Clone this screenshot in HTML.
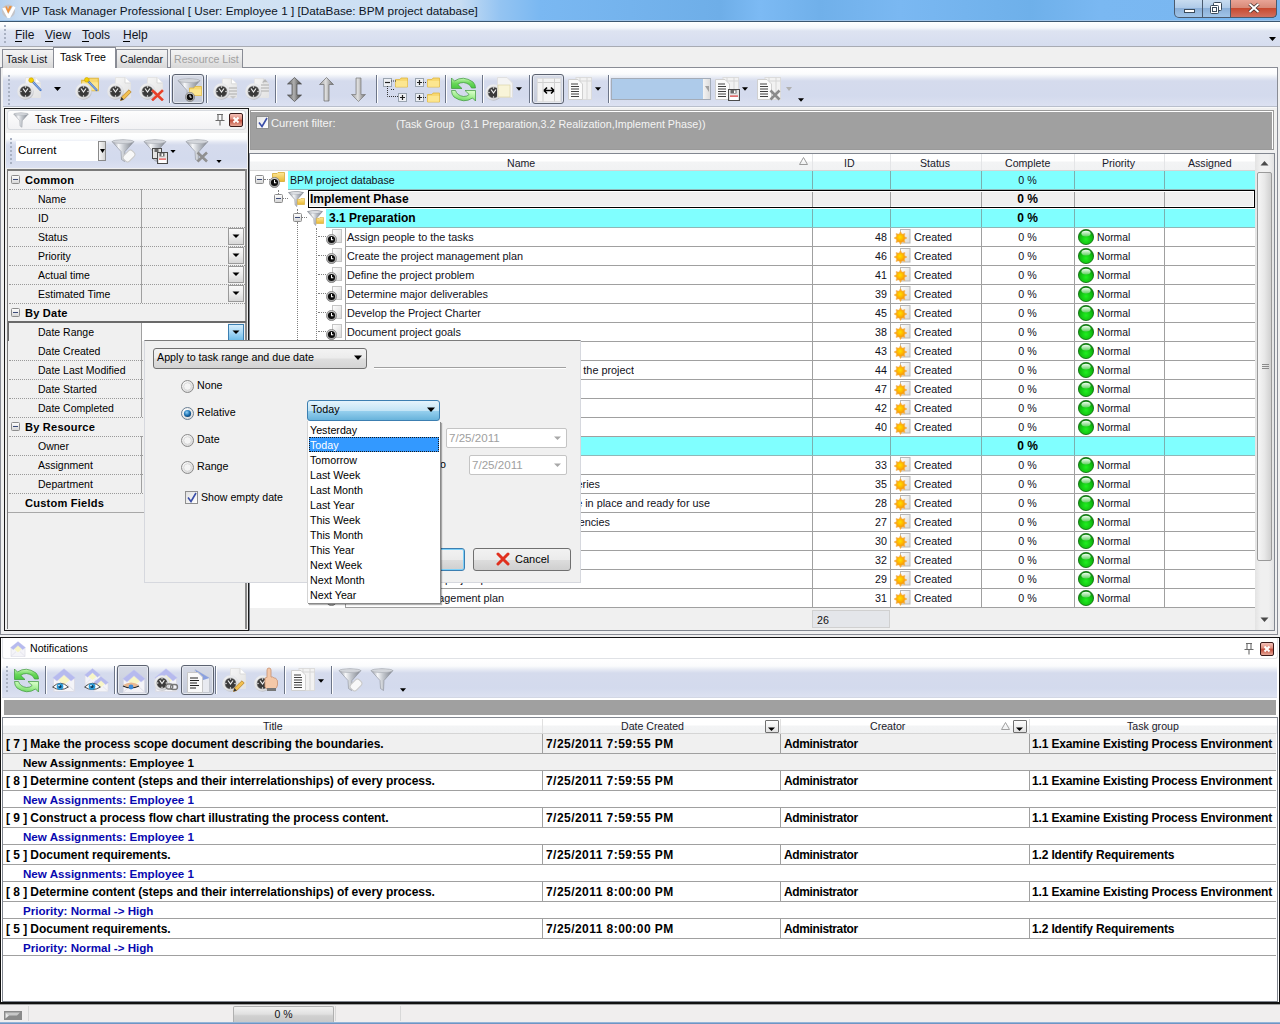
<!DOCTYPE html><html><head><meta charset="utf-8"><style>
html,body{margin:0;padding:0;}
body{width:1280px;height:1024px;overflow:hidden;position:relative;background:#f0f0f0;font-family:"Liberation Sans", sans-serif;color:#000;}
div{box-sizing:border-box;}
</style></head><body>
<svg width="0" height="0" style="position:absolute">
<defs>
<radialGradient id="gball" cx="0.5" cy="0.65" r="0.6"><stop offset="0" stop-color="#20f020"/><stop offset="0.7" stop-color="#10b810"/><stop offset="1" stop-color="#0a800a"/></radialGradient>
<linearGradient id="ghl" x1="0" y1="0" x2="0" y2="1"><stop offset="0" stop-color="#f4fff4"/><stop offset="1" stop-color="#60d060"/></linearGradient>
<radialGradient id="gsun" cx="0.45" cy="0.4" r="0.6"><stop offset="0" stop-color="#ffe000"/><stop offset="0.6" stop-color="#ffb800"/><stop offset="1" stop-color="#f59a10"/></radialGradient>
<linearGradient id="gdoc" x1="0" y1="0" x2="1" y2="1"><stop offset="0" stop-color="#ffffff"/><stop offset="1" stop-color="#d8d8d8"/></linearGradient>
<linearGradient id="gminus" x1="0" y1="0" x2="0" y2="1"><stop offset="0" stop-color="#ffffff"/><stop offset="1" stop-color="#d4d4d4"/></linearGradient>
<linearGradient id="gfun" x1="0" y1="0" x2="1" y2="0"><stop offset="0" stop-color="#8a8f99"/><stop offset="0.35" stop-color="#f4f6f8"/><stop offset="0.6" stop-color="#b8bcc4"/><stop offset="1" stop-color="#7c818a"/></linearGradient>
<linearGradient id="gfold" x1="0" y1="0" x2="0" y2="1"><stop offset="0" stop-color="#ffe89a"/><stop offset="1" stop-color="#e8b830"/></linearGradient>
<radialGradient id="gclkring" cx="0.5" cy="0.4" r="0.6"><stop offset="0" stop-color="#ffffff"/><stop offset="1" stop-color="#9a9a9a"/></radialGradient>
<symbol id="ball" viewBox="0 0 16 16"><circle cx="8" cy="8" r="7.6" fill="url(#gball)" stroke="#0b6a0b" stroke-width="0.8"/><ellipse cx="8" cy="4.6" rx="4.6" ry="2.9" fill="url(#ghl)"/></symbol>
<symbol id="sun" viewBox="0 0 17 17"><rect x="6.5" y="0.5" width="9.5" height="13.5" fill="url(#gdoc)" stroke="#b8b8b8"/><path d="M6.5 2.5 L8.1 5.2 L11 4.5 L10.4 7.5 L13 9 L10.4 10.5 L11 13.5 L8.1 12.8 L6.5 15.5 L4.9 12.8 L2 13.5 L2.6 10.5 L0 9 L2.6 7.5 L2 4.5 L4.9 5.2Z" fill="#f8a828" stroke="#f0b050" stroke-width="0.5"/><circle cx="6.5" cy="9" r="4" fill="url(#gsun)"/></symbol>
<symbol id="clk" viewBox="0 0 12 12"><circle cx="6" cy="6" r="5.6" fill="url(#gclkring)" stroke="#6a6a6a" stroke-width="0.6"/><circle cx="6" cy="6" r="3.9" fill="#0c0c0c"/><path d="M6 3.4 V6.2 H8" stroke="#fff" stroke-width="1.1" fill="none"/></symbol>
<symbol id="tdoc" viewBox="0 0 10 14"><rect x="0.5" y="0.5" width="9" height="13" fill="url(#gdoc)" stroke="#c4c4c4"/></symbol>
<symbol id="minus" viewBox="0 0 9 9"><rect x="0.5" y="0.5" width="8" height="8" rx="1" fill="url(#gminus)" stroke="#8c8c8c"/><rect x="2" y="4" width="5" height="1" fill="#3a4a78"/></symbol>
<symbol id="fun" viewBox="0 0 16 16"><path d="M0.5 1.5 Q8 -0.5 15.5 1.5 L9.2 8.5 L8.8 15.5 L7.2 14 L6.8 8.5Z" fill="url(#gfun)" stroke="#7a7f88" stroke-width="0.6"/><ellipse cx="8" cy="2" rx="6.5" ry="1.2" fill="#e8eaee" stroke="#9da2aa" stroke-width="0.5"/></symbol>
<symbol id="fold" viewBox="0 0 9 8"><path d="M0.5 1.5 H3.5 L4.5 0.5 H8.5 V7.5 H0.5Z" fill="url(#gfold)" stroke="#d0a020" stroke-width="0.6"/></symbol>
<symbol id="fold2" viewBox="0 0 13 10"><path d="M0.5 1.5 H5 L6 0.5 H12.5 V9.5 H0.5Z" fill="url(#gfold)" stroke="#d0a020" stroke-width="0.7"/></symbol>
</defs></svg>
<div style="position:absolute;left:0px;top:0px;width:1280px;height:21px;background:linear-gradient(90deg,#b4d0ee 0px,#c8dcf2 20px,#d2e3f4 240px,#c8ddf3 460px,#94c4f2 500px,#7ab8f2 540px,#6eaee8 720px,#7cbaf4 760px,#70b0ea 820px,#7ab8f2 900px,#6eb0ea 1030px,#7ab8f2 1100px,#78b6f0 1280px)"></div>
<div style="position:absolute;left:0px;top:20px;width:1280px;height:1px;background:#9ec4ea"></div>
<div style="position:absolute;left:0px;top:21px;width:1280px;height:1px;background:#3b5670"></div>
<div style="position:absolute;left:21px;top:3px;white-space:pre;font-size:11.75px;line-height:15px;color:#0c1424">VIP Task Manager Professional [ User: Employee 1 ] [DataBase: BPM project database]</div>
<div style="position:absolute;left:0px;top:22px;width:1280px;height:24px;background:linear-gradient(#ffffff 0px,#f4f6fb 6px,#dde3f1 9px,#d6ddef 24px)"></div>
<div style="position:absolute;left:0px;top:46px;width:1280px;height:1px;background:#a8abb3"></div>
<div style="position:absolute;left:15px;top:28px;white-space:pre;font-size:12px;line-height:15px;color:#10141c">File</div>
<div style="position:absolute;left:15px;top:41px;width:7px;height:1px;background:#000"></div>
<div style="position:absolute;left:45px;top:28px;white-space:pre;font-size:12px;line-height:15px;color:#10141c">View</div>
<div style="position:absolute;left:45px;top:41px;width:8px;height:1px;background:#000"></div>
<div style="position:absolute;left:82px;top:28px;white-space:pre;font-size:12px;line-height:15px;color:#10141c">Tools</div>
<div style="position:absolute;left:82px;top:41px;width:7px;height:1px;background:#000"></div>
<div style="position:absolute;left:123px;top:28px;white-space:pre;font-size:12px;line-height:15px;color:#10141c">Help</div>
<div style="position:absolute;left:123px;top:41px;width:7px;height:1px;background:#000"></div>
<div style="position:absolute;left:0px;top:67px;width:1278px;height:1px;background:#898c95"></div>
<div style="position:absolute;left:2px;top:49px;width:52px;height:19px;background:linear-gradient(#f4f4f4,#e8e8e8 50%,#d8d8d8);border:1px solid #898c95;border-bottom:none"></div>
<div style="position:absolute;left:6px;top:52px;white-space:pre;font-size:10.6px;line-height:14px;color:#10141c">Task List</div>
<div style="position:absolute;left:170px;top:49px;width:73px;height:19px;background:linear-gradient(#f4f4f4,#e8e8e8 50%,#d8d8d8);border:1px solid #898c95;border-bottom:none"></div>
<div style="position:absolute;left:174px;top:52px;white-space:pre;font-size:10.6px;line-height:14px;color:#a0a0a0">Resource List</div>
<div style="position:absolute;left:116px;top:49px;width:52px;height:19px;background:linear-gradient(#f4f4f4,#e8e8e8 50%,#d8d8d8);border:1px solid #898c95;border-bottom:none"></div>
<div style="position:absolute;left:120px;top:52px;white-space:pre;font-size:10.6px;line-height:14px;color:#10141c">Calendar</div>
<div style="position:absolute;left:53px;top:47px;width:63px;height:21px;background:#fff;border:1px solid #898c95;border-bottom:none"></div>
<div style="position:absolute;left:60px;top:50px;white-space:pre;font-size:10.6px;line-height:14px;">Task Tree</div>
<div style="position:absolute;left:0px;top:68px;width:1278px;height:567px;background:#f0f0f0;border:1px solid #898c95;border-top:none"></div>
<div style="position:absolute;left:3px;top:68px;width:1274px;height:39px;background:linear-gradient(#ffffff 0px,#fbfcfd 6px,#e4e8f3 10px,#d5dbed 13px,#d3daed 28px,#dce1f1 38px)"></div>
<div style="position:absolute;left:3px;top:106px;width:1274px;height:1px;background:#b9bfcc"></div>
<div style="position:absolute;left:3px;top:107px;width:1274px;height:1px;background:#f8f8f8"></div>
<div style="position:absolute;left:4px;top:108px;width:245px;height:523px;background:#f0f0f0;border:2px solid #1a1a1a;border-width:1px 1px 1px 1px"></div>
<div style="position:absolute;left:7px;top:110px;width:239px;height:20px;background:linear-gradient(#fdfdfd,#f2f2f4);border:1px solid #d8dbe0;border-radius:3px"></div>
<div style="position:absolute;left:35px;top:112px;white-space:pre;font-size:10.6px;line-height:15px;">Task Tree - Filters</div>
<div style="position:absolute;left:6px;top:133px;width:241px;height:35px;background:linear-gradient(#ffffff 0px,#fbfcfd 6px,#e4e8f3 9px,#d5dbed 12px,#d3daed 26px,#dce1f1 35px)"></div>
<div style="position:absolute;left:16px;top:141px;width:90px;height:20px;background:#fff"></div>
<div style="position:absolute;left:7px;top:169px;width:240px;height:460px;background:#f0f0f0;border:2px solid #7a7a7a;border-width:2px 0 0 1px"></div>
<svg width="0" height="0" style="position:absolute"><defs>
<linearGradient id="gbtn" x1="0" y1="0" x2="0" y2="1"><stop offset="0" stop-color="#fbfbfb"/><stop offset="0.5" stop-color="#ececec"/><stop offset="1" stop-color="#d6d6d6"/></linearGradient>
<linearGradient id="gbtnb" x1="0" y1="0" x2="0" y2="1"><stop offset="0" stop-color="#d9effc"/><stop offset="0.5" stop-color="#a6d8f6"/><stop offset="1" stop-color="#6cbbe8"/></linearGradient>
<symbol id="ddbtn" viewBox="0 0 16 17"><rect x="0.5" y="0.5" width="15" height="16" fill="url(#gbtn)" stroke="#9a9a9a"/><path d="M4.5 6.5 H11.5 L8 10Z" fill="#000"/></symbol>
<symbol id="ddbtnb" viewBox="0 0 16 17"><rect x="0.5" y="0.5" width="15" height="16" fill="url(#gbtnb)" stroke="#3c7fb1"/><path d="M4.5 6.5 H11.5 L8 10Z" fill="#000"/></symbol>
</defs></svg>
<svg style="position:absolute;left:11px;top:175px" width="9" height="9"><use href="#minus" width="9" height="9"/></svg>
<div style="position:absolute;left:25px;top:173px;white-space:pre;font-size:11.1px;line-height:15px;font-weight:bold;letter-spacing:0.2px">Common</div>
<div style="position:absolute;left:9px;top:189px;width:236px;border-top:1px dotted #9a9a9a"></div>
<div style="position:absolute;left:38px;top:192px;white-space:pre;font-size:10.5px;line-height:15px;color:#000">Name</div>
<div style="position:absolute;left:141px;top:189px;width:1px;height:19px;background:#a0a0a0"></div>
<div style="position:absolute;left:9px;top:208px;width:236px;border-top:1px dotted #9a9a9a"></div>
<div style="position:absolute;left:38px;top:211px;white-space:pre;font-size:10.5px;line-height:15px;color:#000">ID</div>
<div style="position:absolute;left:141px;top:208px;width:1px;height:19px;background:#a0a0a0"></div>
<div style="position:absolute;left:9px;top:227px;width:236px;border-top:1px dotted #9a9a9a"></div>
<div style="position:absolute;left:38px;top:230px;white-space:pre;font-size:10.5px;line-height:15px;color:#000">Status</div>
<div style="position:absolute;left:141px;top:227px;width:1px;height:19px;background:#a0a0a0"></div>
<svg style="position:absolute;left:228px;top:228px" width="16" height="17"><use href="#ddbtn" width="16" height="17"/></svg>
<div style="position:absolute;left:9px;top:246px;width:236px;border-top:1px dotted #9a9a9a"></div>
<div style="position:absolute;left:38px;top:249px;white-space:pre;font-size:10.5px;line-height:15px;color:#000">Priority</div>
<div style="position:absolute;left:141px;top:246px;width:1px;height:19px;background:#a0a0a0"></div>
<svg style="position:absolute;left:228px;top:247px" width="16" height="17"><use href="#ddbtn" width="16" height="17"/></svg>
<div style="position:absolute;left:9px;top:265px;width:236px;border-top:1px dotted #9a9a9a"></div>
<div style="position:absolute;left:38px;top:268px;white-space:pre;font-size:10.5px;line-height:15px;color:#000">Actual time</div>
<div style="position:absolute;left:141px;top:265px;width:1px;height:19px;background:#a0a0a0"></div>
<svg style="position:absolute;left:228px;top:266px" width="16" height="17"><use href="#ddbtn" width="16" height="17"/></svg>
<div style="position:absolute;left:9px;top:284px;width:236px;border-top:1px dotted #9a9a9a"></div>
<div style="position:absolute;left:38px;top:287px;white-space:pre;font-size:10.5px;line-height:15px;color:#000">Estimated Time</div>
<div style="position:absolute;left:141px;top:284px;width:1px;height:19px;background:#a0a0a0"></div>
<svg style="position:absolute;left:228px;top:285px" width="16" height="17"><use href="#ddbtn" width="16" height="17"/></svg>
<div style="position:absolute;left:9px;top:303px;width:236px;border-top:1px dotted #9a9a9a"></div>
<svg style="position:absolute;left:11px;top:308px" width="9" height="9"><use href="#minus" width="9" height="9"/></svg>
<div style="position:absolute;left:25px;top:306px;white-space:pre;font-size:11.1px;line-height:15px;font-weight:bold;letter-spacing:0.2px">By Date</div>
<div style="position:absolute;left:38px;top:325px;white-space:pre;font-size:10.5px;line-height:15px;color:#000">Date Range</div>
<div style="position:absolute;left:141px;top:322px;width:1px;height:19px;background:#a0a0a0"></div>
<div style="position:absolute;left:142px;top:323px;width:86px;height:18px;background:#fff"></div>
<svg style="position:absolute;left:228px;top:324px" width="16" height="17"><use href="#ddbtnb" width="16" height="17"/></svg>
<div style="position:absolute;left:38px;top:344px;white-space:pre;font-size:10.5px;line-height:15px;color:#000">Date Created</div>
<div style="position:absolute;left:141px;top:341px;width:1px;height:19px;background:#a0a0a0"></div>
<div style="position:absolute;left:9px;top:360px;width:236px;border-top:1px dotted #9a9a9a"></div>
<div style="position:absolute;left:38px;top:363px;white-space:pre;font-size:10.5px;line-height:15px;color:#000">Date Last Modified</div>
<div style="position:absolute;left:141px;top:360px;width:1px;height:19px;background:#a0a0a0"></div>
<div style="position:absolute;left:9px;top:379px;width:236px;border-top:1px dotted #9a9a9a"></div>
<div style="position:absolute;left:38px;top:382px;white-space:pre;font-size:10.5px;line-height:15px;color:#000">Date Started</div>
<div style="position:absolute;left:141px;top:379px;width:1px;height:19px;background:#a0a0a0"></div>
<div style="position:absolute;left:9px;top:398px;width:236px;border-top:1px dotted #9a9a9a"></div>
<div style="position:absolute;left:38px;top:401px;white-space:pre;font-size:10.5px;line-height:15px;color:#000">Date Completed</div>
<div style="position:absolute;left:141px;top:398px;width:1px;height:19px;background:#a0a0a0"></div>
<div style="position:absolute;left:9px;top:417px;width:236px;border-top:1px dotted #9a9a9a"></div>
<svg style="position:absolute;left:11px;top:422px" width="9" height="9"><use href="#minus" width="9" height="9"/></svg>
<div style="position:absolute;left:25px;top:420px;white-space:pre;font-size:11.1px;line-height:15px;font-weight:bold;letter-spacing:0.2px">By Resource</div>
<div style="position:absolute;left:9px;top:436px;width:236px;border-top:1px dotted #9a9a9a"></div>
<div style="position:absolute;left:38px;top:439px;white-space:pre;font-size:10.5px;line-height:15px;color:#000">Owner</div>
<div style="position:absolute;left:141px;top:436px;width:1px;height:19px;background:#a0a0a0"></div>
<div style="position:absolute;left:9px;top:455px;width:236px;border-top:1px dotted #9a9a9a"></div>
<div style="position:absolute;left:38px;top:458px;white-space:pre;font-size:10.5px;line-height:15px;color:#000">Assignment</div>
<div style="position:absolute;left:141px;top:455px;width:1px;height:19px;background:#a0a0a0"></div>
<div style="position:absolute;left:9px;top:474px;width:236px;border-top:1px dotted #9a9a9a"></div>
<div style="position:absolute;left:38px;top:477px;white-space:pre;font-size:10.5px;line-height:15px;color:#000">Department</div>
<div style="position:absolute;left:141px;top:474px;width:1px;height:19px;background:#a0a0a0"></div>
<div style="position:absolute;left:9px;top:493px;width:236px;border-top:1px dotted #9a9a9a"></div>
<div style="position:absolute;left:25px;top:496px;white-space:pre;font-size:11.1px;line-height:15px;font-weight:bold;letter-spacing:0.2px">Custom Fields</div>
<div style="position:absolute;left:8px;top:512px;width:237px;height:1px;background:#a8a8a8"></div>
<div style="position:absolute;left:245px;top:169px;width:2px;height:460px;background:#8a8a8a"></div>
<div style="position:absolute;left:8px;top:321px;width:238px;height:2px;background:#6a6a6a"></div>
<div style="position:absolute;left:8px;top:321px;width:1px;height:20px;background:#6a6a6a"></div>
<svg width="0" height="0" style="position:absolute"><defs>
<radialGradient id="gring" cx="0.45" cy="0.4" r="0.65"><stop offset="0" stop-color="#ffffff"/><stop offset="0.75" stop-color="#e2e3e6"/><stop offset="1" stop-color="#a8aab0"/></radialGradient>
<linearGradient id="gpage" x1="0" y1="0" x2="1" y2="1"><stop offset="0" stop-color="#f6f6f6"/><stop offset="1" stop-color="#e2e2e2"/></linearGradient>
<linearGradient id="gfunb" x1="0" y1="0" x2="1" y2="0"><stop offset="0" stop-color="#8d929b"/><stop offset="0.3" stop-color="#f6f7f9"/><stop offset="0.55" stop-color="#c4c8ce"/><stop offset="1" stop-color="#7d828b"/></linearGradient>
<linearGradient id="garr" x1="0" y1="0" x2="1" y2="0"><stop offset="0" stop-color="#9a9a9a"/><stop offset="0.45" stop-color="#e0e0e0"/><stop offset="1" stop-color="#6a6a6a"/></linearGradient>
<linearGradient id="garrd" x1="0" y1="0" x2="1" y2="0"><stop offset="0" stop-color="#5a5a5a"/><stop offset="0.45" stop-color="#b0b0b0"/><stop offset="1" stop-color="#3a3a3a"/></linearGradient>
<linearGradient id="ggreen" x1="0" y1="0" x2="0" y2="1"><stop offset="0" stop-color="#c8f8b8"/><stop offset="0.5" stop-color="#6ad85a"/><stop offset="1" stop-color="#48c840"/></linearGradient><linearGradient id="ggreen2" x1="0" y1="1" x2="0.3" y2="0"><stop offset="0" stop-color="#5cd050"/><stop offset="0.6" stop-color="#a8f098"/><stop offset="1" stop-color="#d0fcc0"/></linearGradient>
<linearGradient id="genv" x1="0" y1="0" x2="0" y2="1"><stop offset="0" stop-color="#8aa0e0"/><stop offset="1" stop-color="#b4c4ee"/></linearGradient>
<symbol id="bclk" viewBox="0 0 17 17"><circle cx="8.5" cy="8.5" r="8.3" fill="url(#gring)"/><circle cx="8.5" cy="8.5" r="5.6" fill="#3a3a3a" stroke="#9a9a9a" stroke-width="0.5"/><path d="M6 5.5 L8.5 9 L11 5.5" stroke="#f0f0f0" stroke-width="1.2" fill="none"/><circle cx="8.5" cy="4" r="0.7" fill="#fff"/><circle cx="8.5" cy="13" r="0.7" fill="#fff"/><circle cx="4" cy="8.5" r="0.7" fill="#fff"/><circle cx="13" cy="8.5" r="0.7" fill="#fff"/></symbol>
<symbol id="pg" viewBox="0 0 16 21"><path d="M0.5 0.5 H10 L15.5 6 V20.5 H0.5Z" fill="url(#gpage)" stroke="#e4e4e4"/><path d="M10 0.5 V6 H15.5" fill="#fff" stroke="#d8d8d8"/></symbol>
<symbol id="funb" viewBox="0 0 24 23"><path d="M1 2.5 Q12 -0.5 23 2.5 L14 12.5 L13.5 22.5 L10.5 20.5 L10 12.5Z" fill="url(#gfunb)" stroke="#8a8f98" stroke-width="0.6"/><ellipse cx="12" cy="2.6" rx="10.6" ry="1.9" fill="#d4d7dc" stroke="#a9adb4" stroke-width="0.6"/></symbol>
<symbol id="tbarrow" viewBox="0 0 7 4"><path d="M0 0 H7 L3.5 4Z" fill="#000"/></symbol>
<symbol id="colpg" viewBox="0 0 24 23"><rect x="8" y="0.5" width="15.5" height="22" fill="#f2f2f2" stroke="#dcdcdc"/><path d="M12 0.5 V22.5 M19 0.5 V22.5 M8 4 H23.5" stroke="#d6d6d6"/><path d="M0.5 2.5 H10 L14.5 7 V22.5 H0.5Z" fill="#fbfbfb" stroke="#d0d0d0"/><path d="M3 7 H10 M3 9.5 H11 M3 12 H11 M3 14.5 H11 M3 17 H11 M3 19.5 H11" stroke="#404040" stroke-width="1"/></symbol>
<symbol id="tplus" viewBox="0 0 9 9"><rect x="0.5" y="0.5" width="8" height="8" fill="#eef0f4" stroke="#9aa4b0"/><path d="M2 4.5 H7 M4.5 2 V7" stroke="#222" stroke-width="1.2"/></symbol>
<symbol id="tminus" viewBox="0 0 9 9"><rect x="0.5" y="0.5" width="8" height="8" fill="#eef0f4" stroke="#9aa4b0"/><path d="M2 4.5 H7" stroke="#222" stroke-width="1.2"/></symbol>
<symbol id="fold3" viewBox="0 0 13 10"><path d="M0.5 2 H5 L6 0.5 H12.5 V9.5 H0.5Z" fill="#f8d870" stroke="#e0b840" stroke-width="0.8"/><rect x="0.8" y="3.4" width="11.4" height="5.8" fill="#fce690"/></symbol>
<symbol id="refresh" viewBox="0 0 25 25"><path d="M0.5 1 L3.5 4 Q12 -2 22 5 Q24.5 7.5 24.5 11 L20.5 11 Q19 6.5 12.5 5.5 Q8.5 5.5 6.8 7.5 L11 11.5 L0.5 11.5 Z" fill="url(#ggreen)" stroke="#3c963a" stroke-width="0.7"/><path d="M24.5 24 L21.5 21 Q13 27 3 20 Q0.5 17.5 0.5 13.5 L4.5 13.5 Q6 18.5 12.5 19.5 Q16.5 19.5 18.2 17.5 L14 13.5 L24.5 13.5 Z" fill="url(#ggreen2)" stroke="#3c963a" stroke-width="0.7"/></symbol>
<symbol id="env" viewBox="0 0 24 24"><path d="M1.5 10 V23.5 H22.5 V10Z" fill="#f4f4f8" stroke="#dcdce6"/><path d="M5.5 11.5 L12 5.5 L18.5 11.5 L12 17Z" fill="#f8f6c6"/><path d="M1.5 23 L9 16 M22.5 23 L15 16" stroke="#dedee8"/><path d="M0.8 9.8 L12 0.8 L23.2 9.8 L19 13 L12 6.8 L5 13Z" fill="#b6baee" stroke="#c8cbf2" stroke-width="0.5"/></symbol>
<symbol id="eye" viewBox="0 0 17 9"><path d="M0.6 5 Q8.5 -2.5 16.4 5 Q8.5 10 0.6 5Z" fill="#ffffff" stroke="#3a3a3a" stroke-width="0.9"/><circle cx="8" cy="4.6" r="3.3" fill="#2a9ad8"/><circle cx="8" cy="4.6" r="1.5" fill="#0a3a5a"/><circle cx="7" cy="3.6" r="0.8" fill="#e8f8ff"/></symbol>
</defs></svg>
<div style="position:absolute;left:8px;top:75px;width:2px;height:2px;background:#a9b1c2"></div>
<div style="position:absolute;left:8px;top:79px;width:2px;height:2px;background:#a9b1c2"></div>
<div style="position:absolute;left:8px;top:83px;width:2px;height:2px;background:#a9b1c2"></div>
<div style="position:absolute;left:8px;top:87px;width:2px;height:2px;background:#a9b1c2"></div>
<div style="position:absolute;left:8px;top:91px;width:2px;height:2px;background:#a9b1c2"></div>
<div style="position:absolute;left:8px;top:95px;width:2px;height:2px;background:#a9b1c2"></div>
<div style="position:absolute;left:8px;top:99px;width:2px;height:2px;background:#a9b1c2"></div>
<div style="position:absolute;left:8px;top:103px;width:2px;height:2px;background:#a9b1c2"></div>
<div style="position:absolute;left:4px;top:25px;width:2px;height:2px;background:#a9b1c2"></div>
<div style="position:absolute;left:4px;top:29px;width:2px;height:2px;background:#a9b1c2"></div>
<div style="position:absolute;left:4px;top:33px;width:2px;height:2px;background:#a9b1c2"></div>
<div style="position:absolute;left:4px;top:37px;width:2px;height:2px;background:#a9b1c2"></div>
<div style="position:absolute;left:4px;top:41px;width:2px;height:2px;background:#a9b1c2"></div>
<svg style="position:absolute;left:25px;top:77px" width="16" height="21"><use href="#pg" width="16" height="21"/></svg>
<svg style="position:absolute;left:17px;top:83px" width="17" height="17"><use href="#bclk" width="17" height="17"/></svg>
<svg style="position:absolute;left:28px;top:77px" width="14" height="15" viewBox="0 0 14 15"><path d="M4 4 L12.5 13" stroke="#4a78c8" stroke-width="2.2" stroke-linecap="round"/><path d="M4 4 L12.5 13" stroke="#a8c8f0" stroke-width="0.8"/><circle cx="3.2" cy="3.2" r="2.4" fill="#f4d000" stroke="#c8a000" stroke-width="0.6"/></svg>
<svg style="position:absolute;left:54px;top:87px" width="7" height="4"><use href="#tbarrow" width="7" height="4"/></svg>
<svg style="position:absolute;left:81px;top:77px" width="18" height="15"><use href="#fold3" width="18" height="15"/></svg>
<svg style="position:absolute;left:75px;top:83px" width="17" height="17"><use href="#bclk" width="17" height="17"/></svg>
<svg style="position:absolute;left:84px;top:77px" width="14" height="15" viewBox="0 0 14 15"><path d="M3 3 L12.5 13" stroke="#4a78c8" stroke-width="2.2" stroke-linecap="round"/><path d="M3 3 L12.5 13" stroke="#a8c8f0" stroke-width="0.8"/><circle cx="2.8" cy="2.8" r="2.3" fill="#f4d000" stroke="#c8a000" stroke-width="0.6"/></svg>
<svg style="position:absolute;left:115px;top:77px" width="16" height="21"><use href="#pg" width="16" height="21"/></svg>
<svg style="position:absolute;left:107px;top:83px" width="17" height="17"><use href="#bclk" width="17" height="17"/></svg>
<svg style="position:absolute;left:119px;top:89px" width="13" height="13" viewBox="0 0 13 13"><path d="M1.5 11.5 L2.5 8 L10 0.8 L12.2 3 L4.8 10.5Z" fill="#f2c050" stroke="#b07820" stroke-width="0.7"/><path d="M1.5 11.5 L2.5 8 L4.8 10.5Z" fill="#333"/></svg>
<svg style="position:absolute;left:147px;top:77px" width="16" height="21"><use href="#pg" width="16" height="21"/></svg>
<svg style="position:absolute;left:139px;top:83px" width="17" height="17"><use href="#bclk" width="17" height="17"/></svg>
<svg style="position:absolute;left:151px;top:89px" width="13" height="12" viewBox="0 0 13 12"><path d="M2 2 L11 10.5 M11 2 L2 10.5" stroke="#e8402a" stroke-width="2.6" stroke-linecap="square"/></svg>
<div style="position:absolute;left:169px;top:75px;width:1px;height:28px;background:#6c7588"></div>
<div style="position:absolute;left:170px;top:75px;width:1px;height:28px;background:#ffffff"></div>
<div style="position:absolute;left:172px;top:74px;width:32px;height:30px;background:linear-gradient(#d6dae6,#c4cad9);border:1px solid #5c6270;border-radius:3px;box-shadow:inset 0 0 0 1px #e6e9f0"></div>
<svg style="position:absolute;left:177px;top:78px" width="24" height="23"><use href="#funb" width="24" height="23"/></svg>
<svg style="position:absolute;left:189px;top:86px" width="13" height="10"><use href="#fold3" width="13" height="10"/></svg>
<svg style="position:absolute;left:185px;top:92px" width="10" height="10"><use href="#clk" width="10" height="10"/></svg>
<div style="position:absolute;left:206px;top:75px;width:1px;height:28px;background:#6c7588"></div>
<div style="position:absolute;left:207px;top:75px;width:1px;height:28px;background:#ffffff"></div>
<svg style="position:absolute;left:222px;top:78px" width="15" height="20"><use href="#pg" width="15" height="20"/></svg>
<svg style="position:absolute;left:213px;top:83px" width="17" height="17"><use href="#bclk" width="17" height="17"/></svg>
<svg style="position:absolute;left:229px;top:87px" width="9" height="12" viewBox="0 0 9 12"><path d="M0 1 H8 M0 4 H8 M0 7 H8" stroke="#c0c0c0" stroke-width="1.6"/><path d="M1 9 H7 L4 12Z" fill="#c8c8c8"/></svg>
<svg style="position:absolute;left:254px;top:78px" width="15" height="20"><use href="#pg" width="15" height="20"/></svg>
<svg style="position:absolute;left:245px;top:83px" width="17" height="17"><use href="#bclk" width="17" height="17"/></svg>
<svg style="position:absolute;left:261px;top:79px" width="9" height="14" viewBox="0 0 9 14"><path d="M1 3.5 H7 L4 0Z" fill="#b8b8b8"/><path d="M0 6 H8 M0 9 H8 M0 12 H8" stroke="#c0c0c0" stroke-width="1.6"/></svg>
<div style="position:absolute;left:275px;top:75px;width:1px;height:28px;background:#6c7588"></div>
<div style="position:absolute;left:276px;top:75px;width:1px;height:28px;background:#ffffff"></div>
<svg style="position:absolute;left:287px;top:77px" width="15" height="25" viewBox="0 0 15 25"><path d="M7.5 0.5 L14.5 7 H10 V18 H14.5 L7.5 24.5 L0.5 18 H5 V7 H0.5Z" fill="url(#garrd)" stroke="#4a4a4a" stroke-width="0.7"/></svg>
<svg style="position:absolute;left:319px;top:77px" width="15" height="25" viewBox="0 0 15 25"><path d="M7.5 0.5 L14.5 7.5 H10 V24 H5 V7.5 H0.5Z" fill="url(#garr)" stroke="#6a6a6a" stroke-width="0.7"/></svg>
<svg style="position:absolute;left:351px;top:77px" width="15" height="25" viewBox="0 0 15 25"><path d="M7.5 24.5 L14.5 17.5 H10 V1 H5 V17.5 H0.5Z" fill="url(#garr)" stroke="#7a7a7a" stroke-width="0.7"/></svg>
<div style="position:absolute;left:376px;top:75px;width:1px;height:28px;background:#6c7588"></div>
<div style="position:absolute;left:377px;top:75px;width:1px;height:28px;background:#ffffff"></div>
<svg style="position:absolute;left:383px;top:78px" width="9" height="9"><use href="#tminus" width="9" height="9"/></svg>
<svg style="position:absolute;left:395px;top:77px" width="13" height="11"><use href="#fold3" width="13" height="11"/></svg>
<svg style="position:absolute;left:386px;top:86px" width="13" height="12" viewBox="0 0 13 12"><path d="M1.5 0 V10.5 H12" stroke="#333" stroke-dasharray="1 1" fill="none"/><path d="M5 3.5 H9" stroke="#333" stroke-dasharray="1 1"/></svg>
<svg style="position:absolute;left:391px;top:80px" width="5" height="2" viewBox="0 0 5 2"><path d="M0 1 H5" stroke="#333" stroke-dasharray="1 1"/></svg>
<svg style="position:absolute;left:398px;top:93px" width="9" height="9"><use href="#tplus" width="9" height="9"/></svg>
<svg style="position:absolute;left:415px;top:78px" width="9" height="9"><use href="#tplus" width="9" height="9"/></svg>
<svg style="position:absolute;left:427px;top:77px" width="13" height="11"><use href="#fold3" width="13" height="11"/></svg>
<svg style="position:absolute;left:415px;top:93px" width="9" height="9"><use href="#tplus" width="9" height="9"/></svg>
<svg style="position:absolute;left:427px;top:92px" width="13" height="11"><use href="#fold3" width="13" height="11"/></svg>
<svg style="position:absolute;left:423px;top:81px" width="5" height="18" viewBox="0 0 5 18"><path d="M0 1.5 H4 M0 16.5 H4 M-4 6 V12" stroke="#333" stroke-dasharray="1 1" fill="none"/></svg>
<div style="position:absolute;left:445px;top:75px;width:1px;height:28px;background:#6c7588"></div>
<div style="position:absolute;left:446px;top:75px;width:1px;height:28px;background:#ffffff"></div>
<svg style="position:absolute;left:451px;top:77px" width="25" height="25"><use href="#refresh" width="25" height="25"/></svg>
<div style="position:absolute;left:482px;top:75px;width:1px;height:28px;background:#6c7588"></div>
<div style="position:absolute;left:483px;top:75px;width:1px;height:28px;background:#ffffff"></div>
<svg style="position:absolute;left:485px;top:84px" width="17" height="17"><use href="#bclk" width="17" height="17"/></svg>
<svg style="position:absolute;left:497px;top:77px" width="16" height="22" viewBox="0 0 16 22"><path d="M0.5 0.5 H10 L15.5 6 V20.5 H0.5Z" fill="#f4f4f4" stroke="#e0e0e0"/><rect x="1" y="8" width="12" height="12" fill="#f8f4d8" stroke="#d8d0a0" stroke-width="0.6"/></svg>
<svg style="position:absolute;left:516px;top:87px" width="6" height="4"><use href="#tbarrow" width="6" height="4"/></svg>
<div style="position:absolute;left:529px;top:75px;width:1px;height:28px;background:#6c7588"></div>
<div style="position:absolute;left:530px;top:75px;width:1px;height:28px;background:#ffffff"></div>
<div style="position:absolute;left:532px;top:74px;width:32px;height:30px;background:linear-gradient(#d6dae6,#c4cad9);border:1px solid #5c6270;border-radius:3px;box-shadow:inset 0 0 0 1px #e6e9f0"></div>
<svg style="position:absolute;left:537px;top:78px" width="24" height="24" viewBox="0 0 24 24"><rect x="0.5" y="0.5" width="23" height="23" fill="#f4f4f4" stroke="#e0e0e0"/><path d="M6 0.5 V23.5 M17.5 0.5 V23.5 M0.5 4.5 H23.5" stroke="#cfcfcf"/><path d="M7 12.5 H17 M7 12.5 L10 9.5 M7 12.5 L10 15.5 M17 12.5 L14 9.5 M17 12.5 L14 15.5" stroke="#000" stroke-width="1.6"/></svg>
<svg style="position:absolute;left:568px;top:77px" width="24" height="23"><use href="#colpg" width="24" height="23"/></svg>
<svg style="position:absolute;left:595px;top:87px" width="6" height="4"><use href="#tbarrow" width="6" height="4"/></svg>
<div style="position:absolute;left:608px;top:75px;width:1px;height:28px;background:#6c7588"></div>
<div style="position:absolute;left:609px;top:75px;width:1px;height:28px;background:#ffffff"></div>
<div style="position:absolute;left:611px;top:78px;width:100px;height:22px;background:#aecbea;border:1px solid #a4acb8"></div>
<div style="position:absolute;left:703px;top:79px;width:7px;height:20px;background:linear-gradient(90deg,#f4f4f4,#dcdcdc)"></div>
<svg style="position:absolute;left:705px;top:86px" width="4" height="6" viewBox="0 0 4 6"><path d="M0 0 H4 V6Z" fill="#a0a0a0"/></svg>
<svg style="position:absolute;left:715px;top:77px" width="24" height="23"><use href="#colpg" width="24" height="23"/></svg>
<svg style="position:absolute;left:728px;top:89px" width="12" height="12" viewBox="0 0 12 12"><rect x="0.5" y="0.5" width="11" height="11" fill="#e4e4e4" stroke="#4a4a4a"/><rect x="2.5" y="1" width="6" height="3.5" fill="#6a6a6a"/><rect x="6" y="1.5" width="1.5" height="2.5" fill="#fff"/><rect x="2" y="6.5" width="8" height="4.5" fill="#fff"/><rect x="2" y="6.5" width="8" height="1.2" fill="#d03030"/></svg>
<svg style="position:absolute;left:742px;top:87px" width="6" height="4"><use href="#tbarrow" width="6" height="4"/></svg>
<svg style="position:absolute;left:757px;top:77px" width="24" height="23"><use href="#colpg" width="24" height="23"/></svg>
<svg style="position:absolute;left:769px;top:89px" width="12" height="12" viewBox="0 0 12 12"><path d="M1.5 1.5 L10.5 10.5 M10.5 1.5 L1.5 10.5" stroke="#8a8a8a" stroke-width="2.6"/></svg>
<svg style="position:absolute;left:786px;top:87px" width="6" height="4" viewBox="0 0 6 4"><path d="M0 0 H6 L3 4Z" fill="#b0b0b0"/></svg>
<svg style="position:absolute;left:798px;top:98px" width="6" height="4"><use href="#tbarrow" width="6" height="4"/></svg>
<svg style="position:absolute;left:1269px;top:37px" width="7" height="4" viewBox="0 0 7 4"><path d="M0 0 H7 L3.5 4Z" fill="#000"/></svg>
<svg style="position:absolute;left:13px;top:112px" width="16" height="16"><use href="#funb" width="16" height="16"/></svg>
<svg style="position:absolute;left:214px;top:113px" width="12" height="13" viewBox="0 0 12 13"><path d="M3 1.5 H9 M4 1.5 V7 M8 1.5 V7 M1.5 7.5 H10.5 M6 7.5 V12.5" stroke="#6a6a6a" stroke-width="1.1" fill="none"/></svg>
<div style="position:absolute;left:229px;top:113px;width:14px;height:14px;background:linear-gradient(#f4c0b8 0%,#e09080 40%,#c05040 55%,#e8a898 100%);border:1px solid #3a1a1a;border-radius:2px"></div>
<svg style="position:absolute;left:232px;top:116px" width="8" height="8" viewBox="0 0 8 8"><path d="M1.5 1.5 L6.5 6.5 M6.5 1.5 L1.5 6.5" stroke="#fff" stroke-width="2"/></svg>
<div style="position:absolute;left:10px;top:138px;width:2px;height:2px;background:#a9b1c2"></div>
<div style="position:absolute;left:10px;top:142px;width:2px;height:2px;background:#a9b1c2"></div>
<div style="position:absolute;left:10px;top:146px;width:2px;height:2px;background:#a9b1c2"></div>
<div style="position:absolute;left:10px;top:150px;width:2px;height:2px;background:#a9b1c2"></div>
<div style="position:absolute;left:10px;top:154px;width:2px;height:2px;background:#a9b1c2"></div>
<div style="position:absolute;left:10px;top:158px;width:2px;height:2px;background:#a9b1c2"></div>
<div style="position:absolute;left:10px;top:162px;width:2px;height:2px;background:#a9b1c2"></div>
<div style="position:absolute;left:18px;top:143px;white-space:pre;font-size:11.5px;line-height:15px;">Current</div>
<div style="position:absolute;left:98px;top:141px;width:8px;height:20px;background:linear-gradient(90deg,#f8f8f8,#d4d4d4);border:1px solid #8a8a8a"></div>
<svg style="position:absolute;left:100px;top:149px" width="5" height="4" viewBox="0 0 5 4"><path d="M0 0 H5 L2.5 4Z" fill="#000"/></svg>
<svg style="position:absolute;left:111px;top:139px" width="24" height="23"><use href="#funb" width="24" height="23"/></svg>
<svg style="position:absolute;left:121px;top:149px" width="15" height="14" viewBox="0 0 15 14"><rect x="2" y="3" width="12" height="8" rx="3" transform="rotate(-45 8 7)" fill="#f8f8f8" stroke="#c8c8c8"/></svg>
<svg style="position:absolute;left:143px;top:139px" width="24" height="23"><use href="#funb" width="24" height="23"/></svg>
<svg style="position:absolute;left:152px;top:148px" width="17" height="16" viewBox="0 0 17 16"><g stroke="#4a4a4a" stroke-width="1"><rect x="0.5" y="0.5" width="9" height="10" fill="#e4e4e4"/><rect x="5.5" y="4.5" width="10" height="11" fill="#e4e4e4"/></g><rect x="2.5" y="1" width="4" height="3" fill="#6a6a6a"/><rect x="7.5" y="5" width="5" height="3.5" fill="#6a6a6a"/><rect x="9.5" y="5.5" width="1.5" height="2.5" fill="#fff"/><rect x="7" y="10.5" width="7" height="4.5" fill="#fff"/><rect x="7" y="10.5" width="7" height="1.2" fill="#e04040"/></svg>
<svg style="position:absolute;left:170px;top:150px" width="6" height="3"><use href="#tbarrow" width="6" height="3"/></svg>
<svg style="position:absolute;left:185px;top:139px" width="24" height="23"><use href="#funb" width="24" height="23"/></svg>
<svg style="position:absolute;left:196px;top:151px" width="13" height="12" viewBox="0 0 13 12"><path d="M1.5 1.5 L11 10.5 M11 1.5 L1.5 10.5" stroke="#909090" stroke-width="2.6"/></svg>
<svg style="position:absolute;left:216px;top:160px" width="6" height="3"><use href="#tbarrow" width="6" height="3"/></svg>
<svg style="position:absolute;left:1px;top:3px" width="15" height="15" viewBox="0 0 15 15"><circle cx="7.5" cy="8" r="6.6" fill="#c4c4c8"/><path d="M1.2 5.5 L6.5 15 L9 15 L14.5 4.5 L12 3 L7.2 11 L4 4Z" fill="#ffffff"/><path d="M2.2 5 L4.2 3.6 L7.2 10.5 L10.8 3.2 L8.5 3 L7 6.5 L5.8 3.2Z" fill="#f09038"/></svg>
<div style="position:absolute;left:1174px;top:0px;width:103px;height:18px;border:1px solid #4a5a6e;border-top:none;border-radius:0 0 5px 5px;overflow:hidden;background:linear-gradient(#c8dcf0 0%,#b0cbe8 45%,#8cb0d8 50%,#a0c4e8 100%)"></div>
<div style="position:absolute;left:1230px;top:0px;width:47px;height:18px;background:linear-gradient(#e8a496 0%,#d88a78 45%,#c84a30 50%,#d07060 100%);border-left:1px solid #4a5a6e;border-radius:0 0 5px 0;border-bottom:1px solid #4a5a6e;border-right:1px solid #4a5a6e"></div>
<div style="position:absolute;left:1202px;top:0px;width:1px;height:17px;background:#4a5a6e"></div>
<div style="position:absolute;left:1184px;top:9px;width:11px;height:4px;background:#fff;border:1px solid #3a4a5a"></div>
<svg style="position:absolute;left:1209px;top:2px" width="14" height="12" viewBox="0 0 14 12"><rect x="4.5" y="0.5" width="8" height="8" rx="1" fill="#fff" stroke="#3a4a5a"/><rect x="1.5" y="3.5" width="8" height="8" rx="1" fill="#fff" stroke="#3a4a5a"/><rect x="3.5" y="5.5" width="4" height="4" fill="none" stroke="#3a4a5a"/></svg>
<svg style="position:absolute;left:1247px;top:2px" width="14" height="12" viewBox="0 0 14 12"><path d="M2.5 2 L11.5 10 M11.5 2 L2.5 10" stroke="#3a2a2a" stroke-width="3.4"/><path d="M2.5 2 L11.5 10 M11.5 2 L2.5 10" stroke="#fff" stroke-width="2"/></svg>
<div style="position:absolute;left:250px;top:110px;width:1024px;height:40px;background:#fff;border:1px solid #9a9a9a"></div>
<div style="position:absolute;left:251px;top:112px;width:1021px;height:37px;background:#a0a0a0"></div>
<div style="position:absolute;left:249px;top:153px;width:1026px;height:478px;background:#fff;border:1px solid #828790"></div>
<div style="position:absolute;left:250px;top:154px;width:1005px;height:16px;background:linear-gradient(#ffffff 0px,#ffffff 7px,#f3f4f5 8px,#f1f2f3 16px)"></div>
<div style="position:absolute;left:250px;top:608px;width:1005px;height:22px;background:#f0f0f0"></div>
<div style="position:absolute;left:1255px;top:154px;width:19px;height:476px;background:linear-gradient(90deg,#e3e3e3,#f0f0f0 30%,#f0f0f0 70%,#e3e3e3)"></div>
<div style="position:absolute;left:256px;top:116px;width:13px;height:13px;background:linear-gradient(135deg,#e6e6e6,#ffffff);border:1px solid #8e8f8f"></div>
<svg style="position:absolute;left:258px;top:117px" width="10" height="11" viewBox="0 0 10 11"><path d="M1 5.5 L4 9.5 L9 1" stroke="#3a4ea8" stroke-width="1.6" fill="none"/></svg>
<div style="position:absolute;left:271px;top:116px;white-space:pre;font-size:11.2px;line-height:15px;color:#f4f4f4">Current filter:</div>
<div style="position:absolute;left:396px;top:117px;white-space:pre;font-size:10.75px;line-height:15px;color:#f4f4f4">(Task Group  (3.1 Preparation,3.2 Realization,Implement Phase))</div>
<div style="position:absolute;left:812px;top:154px;width:1px;height:16px;background:#e4e5e7"></div>
<div style="position:absolute;left:890px;top:154px;width:1px;height:16px;background:#e4e5e7"></div>
<div style="position:absolute;left:981px;top:154px;width:1px;height:16px;background:#e4e5e7"></div>
<div style="position:absolute;left:1074px;top:154px;width:1px;height:16px;background:#e4e5e7"></div>
<div style="position:absolute;left:1164px;top:154px;width:1px;height:16px;background:#e4e5e7"></div>
<div style="position:absolute;left:250px;top:170px;width:1005px;height:1px;background:#d5d5d5"></div>
<div style="position:absolute;left:507px;top:156px;white-space:pre;font-size:10.6px;line-height:14px;color:#1a1a2a">Name</div>
<div style="position:absolute;left:844px;top:156px;white-space:pre;font-size:10.6px;line-height:14px;color:#1a1a2a">ID</div>
<div style="position:absolute;left:920px;top:156px;white-space:pre;font-size:10.6px;line-height:14px;color:#1a1a2a">Status</div>
<div style="position:absolute;left:1005px;top:156px;white-space:pre;font-size:10.6px;line-height:14px;color:#1a1a2a">Complete</div>
<div style="position:absolute;left:1102px;top:156px;white-space:pre;font-size:10.6px;line-height:14px;color:#1a1a2a">Priority</div>
<div style="position:absolute;left:1188px;top:156px;white-space:pre;font-size:10.6px;line-height:14px;color:#1a1a2a">Assigned</div>
<svg style="position:absolute;left:799px;top:157px" width="9" height="8"><path d="M4.5 0.5 L8.5 7.5 H0.5Z" fill="none" stroke="#9a9a9a"/></svg>
<svg style="position:absolute;left:1260px;top:160px" width="9" height="6"><path d="M0.5 5.5 L4.5 1 L8.5 5.5Z" fill="#4a4a4a"/></svg>
<svg style="position:absolute;left:1260px;top:617px" width="9" height="6"><path d="M0.5 0.5 L4.5 5 L8.5 0.5Z" fill="#4a4a4a"/></svg>
<div style="position:absolute;left:1257px;top:172px;width:15px;height:389px;background:linear-gradient(90deg,#f6f6f6,#e8e8e8 50%,#d0d0d0);border:1px solid #9a9a9a;border-radius:2px"></div>
<div style="position:absolute;left:1262px;top:364px;width:7px;height:1px;background:#8a8a8a"></div>
<div style="position:absolute;left:1262px;top:366px;width:7px;height:1px;background:#8a8a8a"></div>
<div style="position:absolute;left:1262px;top:368px;width:7px;height:1px;background:#8a8a8a"></div>
<div style="position:absolute;left:288px;top:171px;width:967px;height:19px;background:#80ffff"></div>
<div style="position:absolute;left:288px;top:189px;width:967px;height:1px;background:#8fb8b8"></div>
<div style="position:absolute;left:812px;top:171px;width:1px;height:18px;background:#7ab0b0"></div>
<div style="position:absolute;left:890px;top:171px;width:1px;height:18px;background:#7ab0b0"></div>
<div style="position:absolute;left:981px;top:171px;width:1px;height:18px;background:#7ab0b0"></div>
<div style="position:absolute;left:1074px;top:171px;width:1px;height:18px;background:#7ab0b0"></div>
<div style="position:absolute;left:1164px;top:171px;width:1px;height:18px;background:#7ab0b0"></div>
<div style="position:absolute;left:290px;top:173px;white-space:pre;font-size:10.65px;line-height:15px;color:#10101a">BPM project database</div>
<div style="position:absolute;left:1005px;top:173px;white-space:pre;font-size:10.7px;line-height:15px;color:#10101a;width:45px;text-align:center">0 %</div>
<svg style="position:absolute;left:255px;top:175px" width="9" height="9"><use href="#minus" width="9" height="9"/></svg>
<div style="position:absolute;left:264px;top:179px;width:6px;border-top:1px dotted #808080"></div>
<svg style="position:absolute;left:272px;top:172px" width="13" height="10"><use href="#fold2" width="13" height="10"/></svg>
<svg style="position:absolute;left:269px;top:177px" width="11" height="11"><use href="#clk" width="11" height="11"/></svg>
<div style="position:absolute;left:308px;top:190px;width:947px;height:18px;background:#f0f0f0;border:1px solid #000;box-shadow:inset 0 0 0 1px #fff"></div>
<div style="position:absolute;left:812px;top:192px;width:1px;height:15px;background:#a0a0a0"></div>
<div style="position:absolute;left:890px;top:192px;width:1px;height:15px;background:#a0a0a0"></div>
<div style="position:absolute;left:981px;top:192px;width:1px;height:15px;background:#a0a0a0"></div>
<div style="position:absolute;left:1074px;top:192px;width:1px;height:15px;background:#a0a0a0"></div>
<div style="position:absolute;left:1164px;top:192px;width:1px;height:15px;background:#a0a0a0"></div>
<div style="position:absolute;left:310px;top:192px;white-space:pre;font-size:12px;line-height:15px;font-weight:bold;color:#000">Implement Phase</div>
<div style="position:absolute;left:1005px;top:192px;white-space:pre;font-size:12px;line-height:15px;font-weight:bold;width:45px;text-align:center">0 %</div>
<svg style="position:absolute;left:274px;top:194px" width="9" height="9"><use href="#minus" width="9" height="9"/></svg>
<div style="position:absolute;left:278px;top:190px;height:4px;border-left:1px dotted #808080"></div>
<div style="position:absolute;left:283px;top:198px;width:5px;border-top:1px dotted #808080"></div>
<svg style="position:absolute;left:288px;top:191px" width="16" height="16"><use href="#fun" width="16" height="16"/></svg>
<svg style="position:absolute;left:297px;top:198px" width="8" height="7"><use href="#fold" width="8" height="7"/></svg>
<div style="position:absolute;left:326px;top:209px;width:929px;height:19px;background:#80ffff"></div>
<div style="position:absolute;left:326px;top:227px;width:929px;height:1px;background:#8fb8b8"></div>
<div style="position:absolute;left:812px;top:209px;width:1px;height:18px;background:#7ab0b0"></div>
<div style="position:absolute;left:890px;top:209px;width:1px;height:18px;background:#7ab0b0"></div>
<div style="position:absolute;left:981px;top:209px;width:1px;height:18px;background:#7ab0b0"></div>
<div style="position:absolute;left:1074px;top:209px;width:1px;height:18px;background:#7ab0b0"></div>
<div style="position:absolute;left:1164px;top:209px;width:1px;height:18px;background:#7ab0b0"></div>
<div style="position:absolute;left:329px;top:211px;white-space:pre;font-size:12px;line-height:15px;font-weight:bold;color:#000">3.1 Preparation</div>
<div style="position:absolute;left:1005px;top:211px;white-space:pre;font-size:12px;line-height:15px;font-weight:bold;width:45px;text-align:center">0 %</div>
<svg style="position:absolute;left:293px;top:213px" width="9" height="9"><use href="#minus" width="9" height="9"/></svg>
<div style="position:absolute;left:297px;top:209px;height:4px;border-left:1px dotted #808080"></div>
<div style="position:absolute;left:302px;top:217px;width:5px;border-top:1px dotted #808080"></div>
<svg style="position:absolute;left:307px;top:210px" width="16" height="16"><use href="#fun" width="16" height="16"/></svg>
<svg style="position:absolute;left:316px;top:217px" width="8" height="7"><use href="#fold" width="8" height="7"/></svg>
<div style="position:absolute;left:297px;top:222px;height:228px;border-left:1px dotted #808080"></div>
<div style="position:absolute;left:316px;top:228px;height:198px;border-left:1px dotted #808080"></div>
<div style="position:absolute;left:345px;top:246px;width:910px;height:1px;background:#a0a0a0"></div>
<div style="position:absolute;left:345px;top:228px;width:1px;height:19px;background:#a0a0a0"></div>
<div style="position:absolute;left:812px;top:228px;width:1px;height:19px;background:#a0a0a0"></div>
<div style="position:absolute;left:890px;top:228px;width:1px;height:19px;background:#a0a0a0"></div>
<div style="position:absolute;left:981px;top:228px;width:1px;height:19px;background:#a0a0a0"></div>
<div style="position:absolute;left:1074px;top:228px;width:1px;height:19px;background:#a0a0a0"></div>
<div style="position:absolute;left:1164px;top:228px;width:1px;height:19px;background:#a0a0a0"></div>
<div style="position:absolute;left:347px;top:230px;white-space:pre;font-size:10.85px;line-height:15px;color:#10101a">Assign people to the tasks</div>
<div style="position:absolute;left:840px;top:230px;white-space:pre;font-size:10.7px;line-height:15px;color:#10101a;width:47px;text-align:right">48</div>
<svg style="position:absolute;left:894px;top:229px" width="17" height="17"><use href="#sun" width="17" height="17"/></svg>
<div style="position:absolute;left:914px;top:230px;white-space:pre;font-size:10.7px;line-height:15px;color:#10101a">Created</div>
<div style="position:absolute;left:1005px;top:230px;white-space:pre;font-size:10.7px;line-height:15px;color:#10101a;width:45px;text-align:center">0 %</div>
<svg style="position:absolute;left:1078px;top:229px" width="16" height="16"><use href="#ball" width="16" height="16"/></svg>
<div style="position:absolute;left:1097px;top:230px;white-space:pre;font-size:10.3px;line-height:15px;color:#10101a">Normal</div>
<div style="position:absolute;left:318px;top:236px;width:8px;border-top:1px dotted #808080"></div>
<svg style="position:absolute;left:332px;top:229px" width="10" height="14"><use href="#tdoc" width="10" height="14"/></svg>
<svg style="position:absolute;left:326px;top:234px" width="11" height="11"><use href="#clk" width="11" height="11"/></svg>
<div style="position:absolute;left:345px;top:265px;width:910px;height:1px;background:#a0a0a0"></div>
<div style="position:absolute;left:345px;top:247px;width:1px;height:19px;background:#a0a0a0"></div>
<div style="position:absolute;left:812px;top:247px;width:1px;height:19px;background:#a0a0a0"></div>
<div style="position:absolute;left:890px;top:247px;width:1px;height:19px;background:#a0a0a0"></div>
<div style="position:absolute;left:981px;top:247px;width:1px;height:19px;background:#a0a0a0"></div>
<div style="position:absolute;left:1074px;top:247px;width:1px;height:19px;background:#a0a0a0"></div>
<div style="position:absolute;left:1164px;top:247px;width:1px;height:19px;background:#a0a0a0"></div>
<div style="position:absolute;left:347px;top:249px;white-space:pre;font-size:10.85px;line-height:15px;color:#10101a">Create the project management plan</div>
<div style="position:absolute;left:840px;top:249px;white-space:pre;font-size:10.7px;line-height:15px;color:#10101a;width:47px;text-align:right">46</div>
<svg style="position:absolute;left:894px;top:248px" width="17" height="17"><use href="#sun" width="17" height="17"/></svg>
<div style="position:absolute;left:914px;top:249px;white-space:pre;font-size:10.7px;line-height:15px;color:#10101a">Created</div>
<div style="position:absolute;left:1005px;top:249px;white-space:pre;font-size:10.7px;line-height:15px;color:#10101a;width:45px;text-align:center">0 %</div>
<svg style="position:absolute;left:1078px;top:248px" width="16" height="16"><use href="#ball" width="16" height="16"/></svg>
<div style="position:absolute;left:1097px;top:249px;white-space:pre;font-size:10.3px;line-height:15px;color:#10101a">Normal</div>
<div style="position:absolute;left:318px;top:255px;width:8px;border-top:1px dotted #808080"></div>
<svg style="position:absolute;left:332px;top:248px" width="10" height="14"><use href="#tdoc" width="10" height="14"/></svg>
<svg style="position:absolute;left:326px;top:253px" width="11" height="11"><use href="#clk" width="11" height="11"/></svg>
<div style="position:absolute;left:345px;top:284px;width:910px;height:1px;background:#a0a0a0"></div>
<div style="position:absolute;left:345px;top:266px;width:1px;height:19px;background:#a0a0a0"></div>
<div style="position:absolute;left:812px;top:266px;width:1px;height:19px;background:#a0a0a0"></div>
<div style="position:absolute;left:890px;top:266px;width:1px;height:19px;background:#a0a0a0"></div>
<div style="position:absolute;left:981px;top:266px;width:1px;height:19px;background:#a0a0a0"></div>
<div style="position:absolute;left:1074px;top:266px;width:1px;height:19px;background:#a0a0a0"></div>
<div style="position:absolute;left:1164px;top:266px;width:1px;height:19px;background:#a0a0a0"></div>
<div style="position:absolute;left:347px;top:268px;white-space:pre;font-size:10.85px;line-height:15px;color:#10101a">Define the project problem</div>
<div style="position:absolute;left:840px;top:268px;white-space:pre;font-size:10.7px;line-height:15px;color:#10101a;width:47px;text-align:right">41</div>
<svg style="position:absolute;left:894px;top:267px" width="17" height="17"><use href="#sun" width="17" height="17"/></svg>
<div style="position:absolute;left:914px;top:268px;white-space:pre;font-size:10.7px;line-height:15px;color:#10101a">Created</div>
<div style="position:absolute;left:1005px;top:268px;white-space:pre;font-size:10.7px;line-height:15px;color:#10101a;width:45px;text-align:center">0 %</div>
<svg style="position:absolute;left:1078px;top:267px" width="16" height="16"><use href="#ball" width="16" height="16"/></svg>
<div style="position:absolute;left:1097px;top:268px;white-space:pre;font-size:10.3px;line-height:15px;color:#10101a">Normal</div>
<div style="position:absolute;left:318px;top:274px;width:8px;border-top:1px dotted #808080"></div>
<svg style="position:absolute;left:332px;top:267px" width="10" height="14"><use href="#tdoc" width="10" height="14"/></svg>
<svg style="position:absolute;left:326px;top:272px" width="11" height="11"><use href="#clk" width="11" height="11"/></svg>
<div style="position:absolute;left:345px;top:303px;width:910px;height:1px;background:#a0a0a0"></div>
<div style="position:absolute;left:345px;top:285px;width:1px;height:19px;background:#a0a0a0"></div>
<div style="position:absolute;left:812px;top:285px;width:1px;height:19px;background:#a0a0a0"></div>
<div style="position:absolute;left:890px;top:285px;width:1px;height:19px;background:#a0a0a0"></div>
<div style="position:absolute;left:981px;top:285px;width:1px;height:19px;background:#a0a0a0"></div>
<div style="position:absolute;left:1074px;top:285px;width:1px;height:19px;background:#a0a0a0"></div>
<div style="position:absolute;left:1164px;top:285px;width:1px;height:19px;background:#a0a0a0"></div>
<div style="position:absolute;left:347px;top:287px;white-space:pre;font-size:10.85px;line-height:15px;color:#10101a">Determine major deliverables</div>
<div style="position:absolute;left:840px;top:287px;white-space:pre;font-size:10.7px;line-height:15px;color:#10101a;width:47px;text-align:right">39</div>
<svg style="position:absolute;left:894px;top:286px" width="17" height="17"><use href="#sun" width="17" height="17"/></svg>
<div style="position:absolute;left:914px;top:287px;white-space:pre;font-size:10.7px;line-height:15px;color:#10101a">Created</div>
<div style="position:absolute;left:1005px;top:287px;white-space:pre;font-size:10.7px;line-height:15px;color:#10101a;width:45px;text-align:center">0 %</div>
<svg style="position:absolute;left:1078px;top:286px" width="16" height="16"><use href="#ball" width="16" height="16"/></svg>
<div style="position:absolute;left:1097px;top:287px;white-space:pre;font-size:10.3px;line-height:15px;color:#10101a">Normal</div>
<div style="position:absolute;left:318px;top:293px;width:8px;border-top:1px dotted #808080"></div>
<svg style="position:absolute;left:332px;top:286px" width="10" height="14"><use href="#tdoc" width="10" height="14"/></svg>
<svg style="position:absolute;left:326px;top:291px" width="11" height="11"><use href="#clk" width="11" height="11"/></svg>
<div style="position:absolute;left:345px;top:322px;width:910px;height:1px;background:#a0a0a0"></div>
<div style="position:absolute;left:345px;top:304px;width:1px;height:19px;background:#a0a0a0"></div>
<div style="position:absolute;left:812px;top:304px;width:1px;height:19px;background:#a0a0a0"></div>
<div style="position:absolute;left:890px;top:304px;width:1px;height:19px;background:#a0a0a0"></div>
<div style="position:absolute;left:981px;top:304px;width:1px;height:19px;background:#a0a0a0"></div>
<div style="position:absolute;left:1074px;top:304px;width:1px;height:19px;background:#a0a0a0"></div>
<div style="position:absolute;left:1164px;top:304px;width:1px;height:19px;background:#a0a0a0"></div>
<div style="position:absolute;left:347px;top:306px;white-space:pre;font-size:10.85px;line-height:15px;color:#10101a">Develop the Project Charter</div>
<div style="position:absolute;left:840px;top:306px;white-space:pre;font-size:10.7px;line-height:15px;color:#10101a;width:47px;text-align:right">45</div>
<svg style="position:absolute;left:894px;top:305px" width="17" height="17"><use href="#sun" width="17" height="17"/></svg>
<div style="position:absolute;left:914px;top:306px;white-space:pre;font-size:10.7px;line-height:15px;color:#10101a">Created</div>
<div style="position:absolute;left:1005px;top:306px;white-space:pre;font-size:10.7px;line-height:15px;color:#10101a;width:45px;text-align:center">0 %</div>
<svg style="position:absolute;left:1078px;top:305px" width="16" height="16"><use href="#ball" width="16" height="16"/></svg>
<div style="position:absolute;left:1097px;top:306px;white-space:pre;font-size:10.3px;line-height:15px;color:#10101a">Normal</div>
<div style="position:absolute;left:318px;top:312px;width:8px;border-top:1px dotted #808080"></div>
<svg style="position:absolute;left:332px;top:305px" width="10" height="14"><use href="#tdoc" width="10" height="14"/></svg>
<svg style="position:absolute;left:326px;top:310px" width="11" height="11"><use href="#clk" width="11" height="11"/></svg>
<div style="position:absolute;left:345px;top:341px;width:910px;height:1px;background:#a0a0a0"></div>
<div style="position:absolute;left:345px;top:323px;width:1px;height:19px;background:#a0a0a0"></div>
<div style="position:absolute;left:812px;top:323px;width:1px;height:19px;background:#a0a0a0"></div>
<div style="position:absolute;left:890px;top:323px;width:1px;height:19px;background:#a0a0a0"></div>
<div style="position:absolute;left:981px;top:323px;width:1px;height:19px;background:#a0a0a0"></div>
<div style="position:absolute;left:1074px;top:323px;width:1px;height:19px;background:#a0a0a0"></div>
<div style="position:absolute;left:1164px;top:323px;width:1px;height:19px;background:#a0a0a0"></div>
<div style="position:absolute;left:347px;top:325px;white-space:pre;font-size:10.85px;line-height:15px;color:#10101a">Document project goals</div>
<div style="position:absolute;left:840px;top:325px;white-space:pre;font-size:10.7px;line-height:15px;color:#10101a;width:47px;text-align:right">38</div>
<svg style="position:absolute;left:894px;top:324px" width="17" height="17"><use href="#sun" width="17" height="17"/></svg>
<div style="position:absolute;left:914px;top:325px;white-space:pre;font-size:10.7px;line-height:15px;color:#10101a">Created</div>
<div style="position:absolute;left:1005px;top:325px;white-space:pre;font-size:10.7px;line-height:15px;color:#10101a;width:45px;text-align:center">0 %</div>
<svg style="position:absolute;left:1078px;top:324px" width="16" height="16"><use href="#ball" width="16" height="16"/></svg>
<div style="position:absolute;left:1097px;top:325px;white-space:pre;font-size:10.3px;line-height:15px;color:#10101a">Normal</div>
<div style="position:absolute;left:318px;top:331px;width:8px;border-top:1px dotted #808080"></div>
<svg style="position:absolute;left:332px;top:324px" width="10" height="14"><use href="#tdoc" width="10" height="14"/></svg>
<svg style="position:absolute;left:326px;top:329px" width="11" height="11"><use href="#clk" width="11" height="11"/></svg>
<div style="position:absolute;left:345px;top:360px;width:910px;height:1px;background:#a0a0a0"></div>
<div style="position:absolute;left:345px;top:342px;width:1px;height:19px;background:#a0a0a0"></div>
<div style="position:absolute;left:812px;top:342px;width:1px;height:19px;background:#a0a0a0"></div>
<div style="position:absolute;left:890px;top:342px;width:1px;height:19px;background:#a0a0a0"></div>
<div style="position:absolute;left:981px;top:342px;width:1px;height:19px;background:#a0a0a0"></div>
<div style="position:absolute;left:1074px;top:342px;width:1px;height:19px;background:#a0a0a0"></div>
<div style="position:absolute;left:1164px;top:342px;width:1px;height:19px;background:#a0a0a0"></div>
<div style="position:absolute;left:347px;top:344px;white-space:pre;font-size:10.85px;line-height:15px;color:#10101a">Establish the project team</div>
<div style="position:absolute;left:840px;top:344px;white-space:pre;font-size:10.7px;line-height:15px;color:#10101a;width:47px;text-align:right">43</div>
<svg style="position:absolute;left:894px;top:343px" width="17" height="17"><use href="#sun" width="17" height="17"/></svg>
<div style="position:absolute;left:914px;top:344px;white-space:pre;font-size:10.7px;line-height:15px;color:#10101a">Created</div>
<div style="position:absolute;left:1005px;top:344px;white-space:pre;font-size:10.7px;line-height:15px;color:#10101a;width:45px;text-align:center">0 %</div>
<svg style="position:absolute;left:1078px;top:343px" width="16" height="16"><use href="#ball" width="16" height="16"/></svg>
<div style="position:absolute;left:1097px;top:344px;white-space:pre;font-size:10.3px;line-height:15px;color:#10101a">Normal</div>
<div style="position:absolute;left:318px;top:350px;width:8px;border-top:1px dotted #808080"></div>
<svg style="position:absolute;left:332px;top:343px" width="10" height="14"><use href="#tdoc" width="10" height="14"/></svg>
<svg style="position:absolute;left:326px;top:348px" width="11" height="11"><use href="#clk" width="11" height="11"/></svg>
<div style="position:absolute;left:345px;top:379px;width:910px;height:1px;background:#a0a0a0"></div>
<div style="position:absolute;left:345px;top:361px;width:1px;height:19px;background:#a0a0a0"></div>
<div style="position:absolute;left:812px;top:361px;width:1px;height:19px;background:#a0a0a0"></div>
<div style="position:absolute;left:890px;top:361px;width:1px;height:19px;background:#a0a0a0"></div>
<div style="position:absolute;left:981px;top:361px;width:1px;height:19px;background:#a0a0a0"></div>
<div style="position:absolute;left:1074px;top:361px;width:1px;height:19px;background:#a0a0a0"></div>
<div style="position:absolute;left:1164px;top:361px;width:1px;height:19px;background:#a0a0a0"></div>
<div style="position:absolute;left:347px;top:363px;white-space:pre;font-size:10.85px;line-height:15px;color:#10101a;width:287px;text-align:right;overflow:hidden;direction:rtl">Identify key stakeholders and sponsors of the project</div>
<div style="position:absolute;left:840px;top:363px;white-space:pre;font-size:10.7px;line-height:15px;color:#10101a;width:47px;text-align:right">44</div>
<svg style="position:absolute;left:894px;top:362px" width="17" height="17"><use href="#sun" width="17" height="17"/></svg>
<div style="position:absolute;left:914px;top:363px;white-space:pre;font-size:10.7px;line-height:15px;color:#10101a">Created</div>
<div style="position:absolute;left:1005px;top:363px;white-space:pre;font-size:10.7px;line-height:15px;color:#10101a;width:45px;text-align:center">0 %</div>
<svg style="position:absolute;left:1078px;top:362px" width="16" height="16"><use href="#ball" width="16" height="16"/></svg>
<div style="position:absolute;left:1097px;top:363px;white-space:pre;font-size:10.3px;line-height:15px;color:#10101a">Normal</div>
<div style="position:absolute;left:318px;top:369px;width:8px;border-top:1px dotted #808080"></div>
<svg style="position:absolute;left:332px;top:362px" width="10" height="14"><use href="#tdoc" width="10" height="14"/></svg>
<svg style="position:absolute;left:326px;top:367px" width="11" height="11"><use href="#clk" width="11" height="11"/></svg>
<div style="position:absolute;left:345px;top:398px;width:910px;height:1px;background:#a0a0a0"></div>
<div style="position:absolute;left:345px;top:380px;width:1px;height:19px;background:#a0a0a0"></div>
<div style="position:absolute;left:812px;top:380px;width:1px;height:19px;background:#a0a0a0"></div>
<div style="position:absolute;left:890px;top:380px;width:1px;height:19px;background:#a0a0a0"></div>
<div style="position:absolute;left:981px;top:380px;width:1px;height:19px;background:#a0a0a0"></div>
<div style="position:absolute;left:1074px;top:380px;width:1px;height:19px;background:#a0a0a0"></div>
<div style="position:absolute;left:1164px;top:380px;width:1px;height:19px;background:#a0a0a0"></div>
<div style="position:absolute;left:347px;top:382px;white-space:pre;font-size:10.85px;line-height:15px;color:#10101a">Identify project scope</div>
<div style="position:absolute;left:840px;top:382px;white-space:pre;font-size:10.7px;line-height:15px;color:#10101a;width:47px;text-align:right">47</div>
<svg style="position:absolute;left:894px;top:381px" width="17" height="17"><use href="#sun" width="17" height="17"/></svg>
<div style="position:absolute;left:914px;top:382px;white-space:pre;font-size:10.7px;line-height:15px;color:#10101a">Created</div>
<div style="position:absolute;left:1005px;top:382px;white-space:pre;font-size:10.7px;line-height:15px;color:#10101a;width:45px;text-align:center">0 %</div>
<svg style="position:absolute;left:1078px;top:381px" width="16" height="16"><use href="#ball" width="16" height="16"/></svg>
<div style="position:absolute;left:1097px;top:382px;white-space:pre;font-size:10.3px;line-height:15px;color:#10101a">Normal</div>
<div style="position:absolute;left:318px;top:388px;width:8px;border-top:1px dotted #808080"></div>
<svg style="position:absolute;left:332px;top:381px" width="10" height="14"><use href="#tdoc" width="10" height="14"/></svg>
<svg style="position:absolute;left:326px;top:386px" width="11" height="11"><use href="#clk" width="11" height="11"/></svg>
<div style="position:absolute;left:345px;top:417px;width:910px;height:1px;background:#a0a0a0"></div>
<div style="position:absolute;left:345px;top:399px;width:1px;height:19px;background:#a0a0a0"></div>
<div style="position:absolute;left:812px;top:399px;width:1px;height:19px;background:#a0a0a0"></div>
<div style="position:absolute;left:890px;top:399px;width:1px;height:19px;background:#a0a0a0"></div>
<div style="position:absolute;left:981px;top:399px;width:1px;height:19px;background:#a0a0a0"></div>
<div style="position:absolute;left:1074px;top:399px;width:1px;height:19px;background:#a0a0a0"></div>
<div style="position:absolute;left:1164px;top:399px;width:1px;height:19px;background:#a0a0a0"></div>
<div style="position:absolute;left:347px;top:401px;white-space:pre;font-size:10.85px;line-height:15px;color:#10101a">Prepare the project budget</div>
<div style="position:absolute;left:840px;top:401px;white-space:pre;font-size:10.7px;line-height:15px;color:#10101a;width:47px;text-align:right">42</div>
<svg style="position:absolute;left:894px;top:400px" width="17" height="17"><use href="#sun" width="17" height="17"/></svg>
<div style="position:absolute;left:914px;top:401px;white-space:pre;font-size:10.7px;line-height:15px;color:#10101a">Created</div>
<div style="position:absolute;left:1005px;top:401px;white-space:pre;font-size:10.7px;line-height:15px;color:#10101a;width:45px;text-align:center">0 %</div>
<svg style="position:absolute;left:1078px;top:400px" width="16" height="16"><use href="#ball" width="16" height="16"/></svg>
<div style="position:absolute;left:1097px;top:401px;white-space:pre;font-size:10.3px;line-height:15px;color:#10101a">Normal</div>
<div style="position:absolute;left:318px;top:407px;width:8px;border-top:1px dotted #808080"></div>
<svg style="position:absolute;left:332px;top:400px" width="10" height="14"><use href="#tdoc" width="10" height="14"/></svg>
<svg style="position:absolute;left:326px;top:405px" width="11" height="11"><use href="#clk" width="11" height="11"/></svg>
<div style="position:absolute;left:345px;top:436px;width:910px;height:1px;background:#a0a0a0"></div>
<div style="position:absolute;left:345px;top:418px;width:1px;height:19px;background:#a0a0a0"></div>
<div style="position:absolute;left:812px;top:418px;width:1px;height:19px;background:#a0a0a0"></div>
<div style="position:absolute;left:890px;top:418px;width:1px;height:19px;background:#a0a0a0"></div>
<div style="position:absolute;left:981px;top:418px;width:1px;height:19px;background:#a0a0a0"></div>
<div style="position:absolute;left:1074px;top:418px;width:1px;height:19px;background:#a0a0a0"></div>
<div style="position:absolute;left:1164px;top:418px;width:1px;height:19px;background:#a0a0a0"></div>
<div style="position:absolute;left:347px;top:420px;white-space:pre;font-size:10.85px;line-height:15px;color:#10101a">Set up project milestones</div>
<div style="position:absolute;left:840px;top:420px;white-space:pre;font-size:10.7px;line-height:15px;color:#10101a;width:47px;text-align:right">40</div>
<svg style="position:absolute;left:894px;top:419px" width="17" height="17"><use href="#sun" width="17" height="17"/></svg>
<div style="position:absolute;left:914px;top:420px;white-space:pre;font-size:10.7px;line-height:15px;color:#10101a">Created</div>
<div style="position:absolute;left:1005px;top:420px;white-space:pre;font-size:10.7px;line-height:15px;color:#10101a;width:45px;text-align:center">0 %</div>
<svg style="position:absolute;left:1078px;top:419px" width="16" height="16"><use href="#ball" width="16" height="16"/></svg>
<div style="position:absolute;left:1097px;top:420px;white-space:pre;font-size:10.3px;line-height:15px;color:#10101a">Normal</div>
<div style="position:absolute;left:318px;top:426px;width:8px;border-top:1px dotted #808080"></div>
<svg style="position:absolute;left:332px;top:419px" width="10" height="14"><use href="#tdoc" width="10" height="14"/></svg>
<svg style="position:absolute;left:326px;top:424px" width="11" height="11"><use href="#clk" width="11" height="11"/></svg>
<div style="position:absolute;left:326px;top:437px;width:929px;height:19px;background:#80ffff"></div>
<div style="position:absolute;left:326px;top:455px;width:929px;height:1px;background:#8fb8b8"></div>
<div style="position:absolute;left:812px;top:437px;width:1px;height:18px;background:#7ab0b0"></div>
<div style="position:absolute;left:890px;top:437px;width:1px;height:18px;background:#7ab0b0"></div>
<div style="position:absolute;left:981px;top:437px;width:1px;height:18px;background:#7ab0b0"></div>
<div style="position:absolute;left:1074px;top:437px;width:1px;height:18px;background:#7ab0b0"></div>
<div style="position:absolute;left:1164px;top:437px;width:1px;height:18px;background:#7ab0b0"></div>
<div style="position:absolute;left:329px;top:439px;white-space:pre;font-size:12px;line-height:15px;font-weight:bold;color:#000">3.2 Realization</div>
<div style="position:absolute;left:1005px;top:439px;white-space:pre;font-size:12px;line-height:15px;font-weight:bold;width:45px;text-align:center">0 %</div>
<svg style="position:absolute;left:293px;top:441px" width="9" height="9"><use href="#minus" width="9" height="9"/></svg>
<svg style="position:absolute;left:307px;top:438px" width="16" height="16"><use href="#fun" width="16" height="16"/></svg>
<svg style="position:absolute;left:316px;top:445px" width="8" height="7"><use href="#fold" width="8" height="7"/></svg>
<div style="position:absolute;left:316px;top:456px;height:141px;border-left:1px dotted #808080"></div>
<div style="position:absolute;left:345px;top:474px;width:910px;height:1px;background:#a0a0a0"></div>
<div style="position:absolute;left:345px;top:456px;width:1px;height:19px;background:#a0a0a0"></div>
<div style="position:absolute;left:812px;top:456px;width:1px;height:19px;background:#a0a0a0"></div>
<div style="position:absolute;left:890px;top:456px;width:1px;height:19px;background:#a0a0a0"></div>
<div style="position:absolute;left:981px;top:456px;width:1px;height:19px;background:#a0a0a0"></div>
<div style="position:absolute;left:1074px;top:456px;width:1px;height:19px;background:#a0a0a0"></div>
<div style="position:absolute;left:1164px;top:456px;width:1px;height:19px;background:#a0a0a0"></div>
<div style="position:absolute;left:347px;top:458px;white-space:pre;font-size:10.85px;line-height:15px;color:#10101a">Assemble the project team</div>
<div style="position:absolute;left:840px;top:458px;white-space:pre;font-size:10.7px;line-height:15px;color:#10101a;width:47px;text-align:right">33</div>
<svg style="position:absolute;left:894px;top:457px" width="17" height="17"><use href="#sun" width="17" height="17"/></svg>
<div style="position:absolute;left:914px;top:458px;white-space:pre;font-size:10.7px;line-height:15px;color:#10101a">Created</div>
<div style="position:absolute;left:1005px;top:458px;white-space:pre;font-size:10.7px;line-height:15px;color:#10101a;width:45px;text-align:center">0 %</div>
<svg style="position:absolute;left:1078px;top:457px" width="16" height="16"><use href="#ball" width="16" height="16"/></svg>
<div style="position:absolute;left:1097px;top:458px;white-space:pre;font-size:10.3px;line-height:15px;color:#10101a">Normal</div>
<div style="position:absolute;left:318px;top:464px;width:8px;border-top:1px dotted #808080"></div>
<svg style="position:absolute;left:332px;top:457px" width="10" height="14"><use href="#tdoc" width="10" height="14"/></svg>
<svg style="position:absolute;left:326px;top:462px" width="11" height="11"><use href="#clk" width="11" height="11"/></svg>
<div style="position:absolute;left:345px;top:493px;width:910px;height:1px;background:#a0a0a0"></div>
<div style="position:absolute;left:345px;top:475px;width:1px;height:19px;background:#a0a0a0"></div>
<div style="position:absolute;left:812px;top:475px;width:1px;height:19px;background:#a0a0a0"></div>
<div style="position:absolute;left:890px;top:475px;width:1px;height:19px;background:#a0a0a0"></div>
<div style="position:absolute;left:981px;top:475px;width:1px;height:19px;background:#a0a0a0"></div>
<div style="position:absolute;left:1074px;top:475px;width:1px;height:19px;background:#a0a0a0"></div>
<div style="position:absolute;left:1164px;top:475px;width:1px;height:19px;background:#a0a0a0"></div>
<div style="position:absolute;left:347px;top:477px;white-space:pre;font-size:10.85px;line-height:15px;color:#10101a;width:253px;text-align:right;overflow:hidden;direction:rtl">Confirm the project scope and final deliveries</div>
<div style="position:absolute;left:840px;top:477px;white-space:pre;font-size:10.7px;line-height:15px;color:#10101a;width:47px;text-align:right">35</div>
<svg style="position:absolute;left:894px;top:476px" width="17" height="17"><use href="#sun" width="17" height="17"/></svg>
<div style="position:absolute;left:914px;top:477px;white-space:pre;font-size:10.7px;line-height:15px;color:#10101a">Created</div>
<div style="position:absolute;left:1005px;top:477px;white-space:pre;font-size:10.7px;line-height:15px;color:#10101a;width:45px;text-align:center">0 %</div>
<svg style="position:absolute;left:1078px;top:476px" width="16" height="16"><use href="#ball" width="16" height="16"/></svg>
<div style="position:absolute;left:1097px;top:477px;white-space:pre;font-size:10.3px;line-height:15px;color:#10101a">Normal</div>
<div style="position:absolute;left:318px;top:483px;width:8px;border-top:1px dotted #808080"></div>
<svg style="position:absolute;left:332px;top:476px" width="10" height="14"><use href="#tdoc" width="10" height="14"/></svg>
<svg style="position:absolute;left:326px;top:481px" width="11" height="11"><use href="#clk" width="11" height="11"/></svg>
<div style="position:absolute;left:345px;top:512px;width:910px;height:1px;background:#a0a0a0"></div>
<div style="position:absolute;left:345px;top:494px;width:1px;height:19px;background:#a0a0a0"></div>
<div style="position:absolute;left:812px;top:494px;width:1px;height:19px;background:#a0a0a0"></div>
<div style="position:absolute;left:890px;top:494px;width:1px;height:19px;background:#a0a0a0"></div>
<div style="position:absolute;left:981px;top:494px;width:1px;height:19px;background:#a0a0a0"></div>
<div style="position:absolute;left:1074px;top:494px;width:1px;height:19px;background:#a0a0a0"></div>
<div style="position:absolute;left:1164px;top:494px;width:1px;height:19px;background:#a0a0a0"></div>
<div style="position:absolute;left:347px;top:496px;white-space:pre;font-size:10.85px;line-height:15px;color:#10101a;width:363px;text-align:right;overflow:hidden;direction:rtl">Ensure that all required resources are in place and ready for use</div>
<div style="position:absolute;left:840px;top:496px;white-space:pre;font-size:10.7px;line-height:15px;color:#10101a;width:47px;text-align:right">28</div>
<svg style="position:absolute;left:894px;top:495px" width="17" height="17"><use href="#sun" width="17" height="17"/></svg>
<div style="position:absolute;left:914px;top:496px;white-space:pre;font-size:10.7px;line-height:15px;color:#10101a">Created</div>
<div style="position:absolute;left:1005px;top:496px;white-space:pre;font-size:10.7px;line-height:15px;color:#10101a;width:45px;text-align:center">0 %</div>
<svg style="position:absolute;left:1078px;top:495px" width="16" height="16"><use href="#ball" width="16" height="16"/></svg>
<div style="position:absolute;left:1097px;top:496px;white-space:pre;font-size:10.3px;line-height:15px;color:#10101a">Normal</div>
<div style="position:absolute;left:318px;top:502px;width:8px;border-top:1px dotted #808080"></div>
<svg style="position:absolute;left:332px;top:495px" width="10" height="14"><use href="#tdoc" width="10" height="14"/></svg>
<svg style="position:absolute;left:326px;top:500px" width="11" height="11"><use href="#clk" width="11" height="11"/></svg>
<div style="position:absolute;left:345px;top:531px;width:910px;height:1px;background:#a0a0a0"></div>
<div style="position:absolute;left:345px;top:513px;width:1px;height:19px;background:#a0a0a0"></div>
<div style="position:absolute;left:812px;top:513px;width:1px;height:19px;background:#a0a0a0"></div>
<div style="position:absolute;left:890px;top:513px;width:1px;height:19px;background:#a0a0a0"></div>
<div style="position:absolute;left:981px;top:513px;width:1px;height:19px;background:#a0a0a0"></div>
<div style="position:absolute;left:1074px;top:513px;width:1px;height:19px;background:#a0a0a0"></div>
<div style="position:absolute;left:1164px;top:513px;width:1px;height:19px;background:#a0a0a0"></div>
<div style="position:absolute;left:347px;top:515px;white-space:pre;font-size:10.85px;line-height:15px;color:#10101a;width:263px;text-align:right;overflow:hidden;direction:rtl">Identify project dependencies</div>
<div style="position:absolute;left:840px;top:515px;white-space:pre;font-size:10.7px;line-height:15px;color:#10101a;width:47px;text-align:right">27</div>
<svg style="position:absolute;left:894px;top:514px" width="17" height="17"><use href="#sun" width="17" height="17"/></svg>
<div style="position:absolute;left:914px;top:515px;white-space:pre;font-size:10.7px;line-height:15px;color:#10101a">Created</div>
<div style="position:absolute;left:1005px;top:515px;white-space:pre;font-size:10.7px;line-height:15px;color:#10101a;width:45px;text-align:center">0 %</div>
<svg style="position:absolute;left:1078px;top:514px" width="16" height="16"><use href="#ball" width="16" height="16"/></svg>
<div style="position:absolute;left:1097px;top:515px;white-space:pre;font-size:10.3px;line-height:15px;color:#10101a">Normal</div>
<div style="position:absolute;left:318px;top:521px;width:8px;border-top:1px dotted #808080"></div>
<svg style="position:absolute;left:332px;top:514px" width="10" height="14"><use href="#tdoc" width="10" height="14"/></svg>
<svg style="position:absolute;left:326px;top:519px" width="11" height="11"><use href="#clk" width="11" height="11"/></svg>
<div style="position:absolute;left:345px;top:550px;width:910px;height:1px;background:#a0a0a0"></div>
<div style="position:absolute;left:345px;top:532px;width:1px;height:19px;background:#a0a0a0"></div>
<div style="position:absolute;left:812px;top:532px;width:1px;height:19px;background:#a0a0a0"></div>
<div style="position:absolute;left:890px;top:532px;width:1px;height:19px;background:#a0a0a0"></div>
<div style="position:absolute;left:981px;top:532px;width:1px;height:19px;background:#a0a0a0"></div>
<div style="position:absolute;left:1074px;top:532px;width:1px;height:19px;background:#a0a0a0"></div>
<div style="position:absolute;left:1164px;top:532px;width:1px;height:19px;background:#a0a0a0"></div>
<div style="position:absolute;left:347px;top:534px;white-space:pre;font-size:10.85px;line-height:15px;color:#10101a">Implement the plan</div>
<div style="position:absolute;left:840px;top:534px;white-space:pre;font-size:10.7px;line-height:15px;color:#10101a;width:47px;text-align:right">30</div>
<svg style="position:absolute;left:894px;top:533px" width="17" height="17"><use href="#sun" width="17" height="17"/></svg>
<div style="position:absolute;left:914px;top:534px;white-space:pre;font-size:10.7px;line-height:15px;color:#10101a">Created</div>
<div style="position:absolute;left:1005px;top:534px;white-space:pre;font-size:10.7px;line-height:15px;color:#10101a;width:45px;text-align:center">0 %</div>
<svg style="position:absolute;left:1078px;top:533px" width="16" height="16"><use href="#ball" width="16" height="16"/></svg>
<div style="position:absolute;left:1097px;top:534px;white-space:pre;font-size:10.3px;line-height:15px;color:#10101a">Normal</div>
<div style="position:absolute;left:318px;top:540px;width:8px;border-top:1px dotted #808080"></div>
<svg style="position:absolute;left:332px;top:533px" width="10" height="14"><use href="#tdoc" width="10" height="14"/></svg>
<svg style="position:absolute;left:326px;top:538px" width="11" height="11"><use href="#clk" width="11" height="11"/></svg>
<div style="position:absolute;left:345px;top:569px;width:910px;height:1px;background:#a0a0a0"></div>
<div style="position:absolute;left:345px;top:551px;width:1px;height:19px;background:#a0a0a0"></div>
<div style="position:absolute;left:812px;top:551px;width:1px;height:19px;background:#a0a0a0"></div>
<div style="position:absolute;left:890px;top:551px;width:1px;height:19px;background:#a0a0a0"></div>
<div style="position:absolute;left:981px;top:551px;width:1px;height:19px;background:#a0a0a0"></div>
<div style="position:absolute;left:1074px;top:551px;width:1px;height:19px;background:#a0a0a0"></div>
<div style="position:absolute;left:1164px;top:551px;width:1px;height:19px;background:#a0a0a0"></div>
<div style="position:absolute;left:347px;top:553px;white-space:pre;font-size:10.85px;line-height:15px;color:#10101a">Monitor project progress</div>
<div style="position:absolute;left:840px;top:553px;white-space:pre;font-size:10.7px;line-height:15px;color:#10101a;width:47px;text-align:right">32</div>
<svg style="position:absolute;left:894px;top:552px" width="17" height="17"><use href="#sun" width="17" height="17"/></svg>
<div style="position:absolute;left:914px;top:553px;white-space:pre;font-size:10.7px;line-height:15px;color:#10101a">Created</div>
<div style="position:absolute;left:1005px;top:553px;white-space:pre;font-size:10.7px;line-height:15px;color:#10101a;width:45px;text-align:center">0 %</div>
<svg style="position:absolute;left:1078px;top:552px" width="16" height="16"><use href="#ball" width="16" height="16"/></svg>
<div style="position:absolute;left:1097px;top:553px;white-space:pre;font-size:10.3px;line-height:15px;color:#10101a">Normal</div>
<div style="position:absolute;left:318px;top:559px;width:8px;border-top:1px dotted #808080"></div>
<svg style="position:absolute;left:332px;top:552px" width="10" height="14"><use href="#tdoc" width="10" height="14"/></svg>
<svg style="position:absolute;left:326px;top:557px" width="11" height="11"><use href="#clk" width="11" height="11"/></svg>
<div style="position:absolute;left:345px;top:588px;width:910px;height:1px;background:#a0a0a0"></div>
<div style="position:absolute;left:345px;top:570px;width:1px;height:19px;background:#a0a0a0"></div>
<div style="position:absolute;left:812px;top:570px;width:1px;height:19px;background:#a0a0a0"></div>
<div style="position:absolute;left:890px;top:570px;width:1px;height:19px;background:#a0a0a0"></div>
<div style="position:absolute;left:981px;top:570px;width:1px;height:19px;background:#a0a0a0"></div>
<div style="position:absolute;left:1074px;top:570px;width:1px;height:19px;background:#a0a0a0"></div>
<div style="position:absolute;left:1164px;top:570px;width:1px;height:19px;background:#a0a0a0"></div>
<div style="position:absolute;left:347px;top:572px;white-space:pre;font-size:10.85px;line-height:15px;color:#10101a">Review and sign-off project plan</div>
<div style="position:absolute;left:840px;top:572px;white-space:pre;font-size:10.7px;line-height:15px;color:#10101a;width:47px;text-align:right">29</div>
<svg style="position:absolute;left:894px;top:571px" width="17" height="17"><use href="#sun" width="17" height="17"/></svg>
<div style="position:absolute;left:914px;top:572px;white-space:pre;font-size:10.7px;line-height:15px;color:#10101a">Created</div>
<div style="position:absolute;left:1005px;top:572px;white-space:pre;font-size:10.7px;line-height:15px;color:#10101a;width:45px;text-align:center">0 %</div>
<svg style="position:absolute;left:1078px;top:571px" width="16" height="16"><use href="#ball" width="16" height="16"/></svg>
<div style="position:absolute;left:1097px;top:572px;white-space:pre;font-size:10.3px;line-height:15px;color:#10101a">Normal</div>
<div style="position:absolute;left:318px;top:578px;width:8px;border-top:1px dotted #808080"></div>
<svg style="position:absolute;left:332px;top:571px" width="10" height="14"><use href="#tdoc" width="10" height="14"/></svg>
<svg style="position:absolute;left:326px;top:576px" width="11" height="11"><use href="#clk" width="11" height="11"/></svg>
<div style="position:absolute;left:345px;top:607px;width:910px;height:1px;background:#a0a0a0"></div>
<div style="position:absolute;left:345px;top:589px;width:1px;height:19px;background:#a0a0a0"></div>
<div style="position:absolute;left:812px;top:589px;width:1px;height:19px;background:#a0a0a0"></div>
<div style="position:absolute;left:890px;top:589px;width:1px;height:19px;background:#a0a0a0"></div>
<div style="position:absolute;left:981px;top:589px;width:1px;height:19px;background:#a0a0a0"></div>
<div style="position:absolute;left:1074px;top:589px;width:1px;height:19px;background:#a0a0a0"></div>
<div style="position:absolute;left:1164px;top:589px;width:1px;height:19px;background:#a0a0a0"></div>
<div style="position:absolute;left:347px;top:591px;white-space:pre;font-size:10.85px;line-height:15px;color:#10101a;width:157px;text-align:right;overflow:hidden;direction:rtl">Update the project management plan</div>
<div style="position:absolute;left:840px;top:591px;white-space:pre;font-size:10.7px;line-height:15px;color:#10101a;width:47px;text-align:right">31</div>
<svg style="position:absolute;left:894px;top:590px" width="17" height="17"><use href="#sun" width="17" height="17"/></svg>
<div style="position:absolute;left:914px;top:591px;white-space:pre;font-size:10.7px;line-height:15px;color:#10101a">Created</div>
<div style="position:absolute;left:1005px;top:591px;white-space:pre;font-size:10.7px;line-height:15px;color:#10101a;width:45px;text-align:center">0 %</div>
<svg style="position:absolute;left:1078px;top:590px" width="16" height="16"><use href="#ball" width="16" height="16"/></svg>
<div style="position:absolute;left:1097px;top:591px;white-space:pre;font-size:10.3px;line-height:15px;color:#10101a">Normal</div>
<div style="position:absolute;left:318px;top:597px;width:8px;border-top:1px dotted #808080"></div>
<svg style="position:absolute;left:332px;top:590px" width="10" height="14"><use href="#tdoc" width="10" height="14"/></svg>
<svg style="position:absolute;left:326px;top:595px" width="11" height="11"><use href="#clk" width="11" height="11"/></svg>
<div style="position:absolute;left:812px;top:610px;width:78px;height:18px;background:#e4e6ea;border:1px solid #d0d0d0"></div>
<div style="position:absolute;left:817px;top:613px;white-space:pre;font-size:10.7px;line-height:15px;color:#111">26</div>
<div style="position:absolute;left:144px;top:340px;width:437px;height:243px;background:#f0f0f0;border:1px solid #d6d8de;border-top:1px solid #7c7c7c"></div>
<div style="position:absolute;left:153px;top:348px;width:214px;height:21px;background:linear-gradient(#f3f3f3 0%,#ececec 45%,#dedede 55%,#d4d4d4 100%);border:1px solid #707070;border-radius:3px"></div>
<div style="position:absolute;left:157px;top:350px;white-space:pre;font-size:10.7px;line-height:15px;">Apply to task range and due date</div>
<svg style="position:absolute;left:354px;top:355px" width="9" height="6"><path d="M0 0.5 H8 L4 5Z" fill="#000"/></svg>
<div style="position:absolute;left:374px;top:367px;width:192px;height:1px;background:#a0a0a0"></div>
<div style="position:absolute;left:374px;top:368px;width:192px;height:1px;background:#ffffff"></div>
<svg width="0" height="0" style="position:absolute"><defs>
<radialGradient id="grad" cx="0.35" cy="0.3" r="0.8"><stop offset="0" stop-color="#ffffff"/><stop offset="1" stop-color="#d6d6d6"/></radialGradient>
<radialGradient id="gradsel" cx="0.4" cy="0.35" r="0.7"><stop offset="0" stop-color="#8ed0f8"/><stop offset="0.6" stop-color="#1a6fb0"/><stop offset="1" stop-color="#0a3a66"/></radialGradient>
<symbol id="radio" viewBox="0 0 13 13"><circle cx="6.5" cy="6.5" r="6" fill="url(#grad)" stroke="#8a8a8a"/><circle cx="6.5" cy="6.5" r="3.8" fill="#f4f4f4" stroke="#c8c8c8" stroke-width="0.6"/></symbol>
<symbol id="radiosel" viewBox="0 0 13 13"><circle cx="6.5" cy="6.5" r="6" fill="url(#grad)" stroke="#6a7f93"/><circle cx="6.5" cy="6.5" r="3.6" fill="url(#gradsel)"/></symbol>
</defs></svg>
<svg style="position:absolute;left:181px;top:380px" width="13" height="13"><use href="#radio" width="13" height="13"/></svg>
<div style="position:absolute;left:197px;top:378px;white-space:pre;font-size:10.7px;line-height:15px;">None</div>
<svg style="position:absolute;left:181px;top:407px" width="13" height="13"><use href="#radiosel" width="13" height="13"/></svg>
<div style="position:absolute;left:197px;top:405px;white-space:pre;font-size:10.7px;line-height:15px;">Relative</div>
<svg style="position:absolute;left:181px;top:434px" width="13" height="13"><use href="#radio" width="13" height="13"/></svg>
<div style="position:absolute;left:197px;top:432px;white-space:pre;font-size:10.7px;line-height:15px;">Date</div>
<svg style="position:absolute;left:181px;top:461px" width="13" height="13"><use href="#radio" width="13" height="13"/></svg>
<div style="position:absolute;left:197px;top:459px;white-space:pre;font-size:10.7px;line-height:15px;">Range</div>
<div style="position:absolute;left:185px;top:491px;width:13px;height:13px;background:linear-gradient(135deg,#e0e0e0,#ffffff);border:1px solid #8f8f8f"></div>
<svg style="position:absolute;left:187px;top:492px" width="10" height="11"><path d="M1 5.5 L4 9.5 L9 1" stroke="#3a4ea8" stroke-width="1.6" fill="none"/></svg>
<div style="position:absolute;left:201px;top:490px;white-space:pre;font-size:10.6px;line-height:15px;">Show empty date</div>
<div style="position:absolute;left:446px;top:428px;width:121px;height:20px;background:#fff;border:1px solid #c4c4c4;border-radius:2px"></div>
<div style="position:absolute;left:449px;top:430px;white-space:pre;font-size:11.6px;line-height:15px;color:#a0a0a0">7/25/2011</div>
<svg style="position:absolute;left:554px;top:436px" width="8" height="5"><path d="M0 0.5 H7 L3.5 4Z" fill="#a8a8a8"/></svg>
<div style="position:absolute;left:469px;top:455px;width:98px;height:20px;background:#fff;border:1px solid #c4c4c4;border-radius:2px"></div>
<div style="position:absolute;left:472px;top:457px;white-space:pre;font-size:11.6px;line-height:15px;color:#a0a0a0">7/25/2011</div>
<svg style="position:absolute;left:554px;top:463px" width="8" height="5"><path d="M0 0.5 H7 L3.5 4Z" fill="#a8a8a8"/></svg>
<div style="position:absolute;left:440px;top:457px;white-space:pre;font-size:10.7px;line-height:15px;">o</div>
<div style="position:absolute;left:420px;top:548px;width:45px;height:23px;background:linear-gradient(#f2f2f2 0%,#ebebeb 50%,#dddddd 51%,#cfcfcf 100%);border:1px solid #3c7fb1;border-radius:3px;box-shadow:inset 0 0 0 1px #7ed0f8"></div>
<div style="position:absolute;left:473px;top:548px;width:98px;height:23px;background:linear-gradient(#f2f2f2 0%,#ebebeb 50%,#dddddd 51%,#cfcfcf 100%);border:1px solid #707070;border-radius:3px"></div>
<svg style="position:absolute;left:496px;top:552px" width="14" height="14"><path d="M2 2 L12 12 M12 2 L2 12" stroke="#e0301e" stroke-width="3" stroke-linecap="round"/></svg>
<div style="position:absolute;left:515px;top:552px;white-space:pre;font-size:11px;line-height:15px;">Cancel</div>
<div style="position:absolute;left:307px;top:400px;width:133px;height:21px;background:linear-gradient(#e5f4fc 0%,#c4e5f6 50%,#98d1ef 51%,#68b3db 100%);border:1px solid #3c7fb1;border-radius:3px"></div>
<div style="position:absolute;left:311px;top:402px;white-space:pre;font-size:10.7px;line-height:15px;">Today</div>
<svg style="position:absolute;left:427px;top:407px" width="9" height="6"><path d="M0 0.5 H8 L4 5Z" fill="#000"/></svg>
<div style="position:absolute;left:307px;top:421px;width:133px;height:182px;background:#fff;border-left:1px solid #d4d4d4;box-shadow:1px 1px 0 #8a8a8a,2px 2px 1px rgba(0,0,0,0.3)"></div>
<div style="position:absolute;left:309px;top:437px;width:130px;height:15px;background:#3399ff;border:1px dotted #1a1a1a"></div>
<div style="position:absolute;left:310px;top:423px;white-space:pre;font-size:10.7px;line-height:15px;">Yesterday</div>
<div style="position:absolute;left:310px;top:438px;white-space:pre;font-size:10.7px;line-height:15px;color:#fff">Today</div>
<div style="position:absolute;left:310px;top:453px;white-space:pre;font-size:10.7px;line-height:15px;">Tomorrow</div>
<div style="position:absolute;left:310px;top:468px;white-space:pre;font-size:10.7px;line-height:15px;">Last Week</div>
<div style="position:absolute;left:310px;top:483px;white-space:pre;font-size:10.7px;line-height:15px;">Last Month</div>
<div style="position:absolute;left:310px;top:498px;white-space:pre;font-size:10.7px;line-height:15px;">Last Year</div>
<div style="position:absolute;left:310px;top:513px;white-space:pre;font-size:10.7px;line-height:15px;">This Week</div>
<div style="position:absolute;left:310px;top:528px;white-space:pre;font-size:10.7px;line-height:15px;">This Month</div>
<div style="position:absolute;left:310px;top:543px;white-space:pre;font-size:10.7px;line-height:15px;">This Year</div>
<div style="position:absolute;left:310px;top:558px;white-space:pre;font-size:10.7px;line-height:15px;">Next Week</div>
<div style="position:absolute;left:310px;top:573px;white-space:pre;font-size:10.7px;line-height:15px;">Next Month</div>
<div style="position:absolute;left:310px;top:588px;white-space:pre;font-size:10.7px;line-height:15px;">Next Year</div>
<div style="position:absolute;left:0px;top:637px;width:1280px;height:367px;background:#fff;border:1px solid #111;border-width:1px 1px 2px 1px"></div>
<div style="position:absolute;left:2px;top:638px;width:1274px;height:21px;background:linear-gradient(#ffffff,#f5f6f8)"></div>
<div style="position:absolute;left:2px;top:660px;width:1275px;height:38px;background:linear-gradient(#ffffff 0px,#fbfcfd 6px,#e4e8f3 10px,#d5dbed 13px,#d3daed 28px,#dce1f1 37px,#c8cdd8 38px)"></div>
<div style="position:absolute;left:4px;top:700px;width:1272px;height:15px;background:#a0a0a0"></div>
<div style="position:absolute;left:2px;top:717px;width:1276px;height:285px;background:#fff;border:1px solid #828790"></div>
<div style="position:absolute;left:3px;top:718px;width:1274px;height:16px;background:linear-gradient(#ffffff 0px,#ffffff 7px,#f3f4f5 8px,#f1f2f3 16px)"></div>
<div style="position:absolute;left:542px;top:719px;width:1px;height:15px;background:#e0e0e0"></div>
<div style="position:absolute;left:780px;top:719px;width:1px;height:15px;background:#e0e0e0"></div>
<div style="position:absolute;left:1029px;top:719px;width:1px;height:15px;background:#e0e0e0"></div>
<div style="position:absolute;left:3px;top:733px;width:1273px;height:1px;background:#d5d5d5"></div>
<div style="position:absolute;left:263px;top:719px;white-space:pre;font-size:10.6px;line-height:14px;color:#1a1a2a">Title</div>
<div style="position:absolute;left:621px;top:719px;white-space:pre;font-size:10.6px;line-height:14px;color:#1a1a2a">Date Created</div>
<div style="position:absolute;left:870px;top:719px;white-space:pre;font-size:10.6px;line-height:14px;color:#1a1a2a">Creator</div>
<div style="position:absolute;left:1127px;top:719px;white-space:pre;font-size:10.6px;line-height:14px;color:#1a1a2a">Task group</div>
<svg style="position:absolute;left:1001px;top:722px" width="9" height="8"><path d="M4.5 0.5 L8.5 7.5 H0.5Z" fill="none" stroke="#a0a0a0"/></svg>
<div style="position:absolute;left:765px;top:720px;width:14px;height:13px;background:linear-gradient(#fdfdfd,#e2e2e2);border:1px solid #707070;border-radius:1px"></div>
<svg style="position:absolute;left:768px;top:727px" width="8" height="5"><path d="M0 0.5 H7 L3.5 4Z" fill="#000"/></svg>
<div style="position:absolute;left:1013px;top:720px;width:14px;height:13px;background:linear-gradient(#fdfdfd,#e2e2e2);border:1px solid #707070;border-radius:1px"></div>
<svg style="position:absolute;left:1016px;top:727px" width="8" height="5"><path d="M0 0.5 H7 L3.5 4Z" fill="#000"/></svg>
<div style="position:absolute;left:3px;top:734px;width:1273px;height:37px;background:#f0f0f0"></div>
<div style="position:absolute;left:542px;top:734px;width:1px;height:19px;background:#a0a0a0"></div>
<div style="position:absolute;left:780px;top:734px;width:1px;height:19px;background:#a0a0a0"></div>
<div style="position:absolute;left:1029px;top:734px;width:1px;height:19px;background:#a0a0a0"></div>
<div style="position:absolute;left:3px;top:753px;width:1273px;height:1px;background:#a0a0a0"></div>
<div style="position:absolute;left:3px;top:770px;width:1273px;height:1px;background:#a0a0a0"></div>
<div style="position:absolute;left:6px;top:737px;white-space:pre;font-size:12px;line-height:15px;font-weight:bold;letter-spacing:-0.05px">[ 7 ] Make the process scope document describing the boundaries.</div>
<div style="position:absolute;left:546px;top:737px;white-space:pre;font-size:12px;line-height:15px;font-weight:bold;letter-spacing:0.45px">7/25/2011 7:59:55 PM</div>
<div style="position:absolute;left:784px;top:737px;white-space:pre;font-size:12px;line-height:15px;font-weight:bold;letter-spacing:-0.38px">Administrator</div>
<div style="position:absolute;left:1032px;top:737px;white-space:pre;font-size:12px;line-height:15px;font-weight:bold;letter-spacing:-0.15px">1.1 Examine Existing Process Environment</div>
<div style="position:absolute;left:23px;top:755px;white-space:pre;font-size:11.6px;line-height:15px;font-weight:bold;color:#000">New Assignments: Employee 1</div>
<div style="position:absolute;left:542px;top:771px;width:1px;height:19px;background:#a0a0a0"></div>
<div style="position:absolute;left:780px;top:771px;width:1px;height:19px;background:#a0a0a0"></div>
<div style="position:absolute;left:1029px;top:771px;width:1px;height:19px;background:#a0a0a0"></div>
<div style="position:absolute;left:3px;top:790px;width:1273px;height:1px;background:#a0a0a0"></div>
<div style="position:absolute;left:3px;top:807px;width:1273px;height:1px;background:#a0a0a0"></div>
<div style="position:absolute;left:6px;top:774px;white-space:pre;font-size:12px;line-height:15px;font-weight:bold;letter-spacing:-0.05px">[ 8 ] Determine content (steps and their interrelationships) of every process.</div>
<div style="position:absolute;left:546px;top:774px;white-space:pre;font-size:12px;line-height:15px;font-weight:bold;letter-spacing:0.45px">7/25/2011 7:59:55 PM</div>
<div style="position:absolute;left:784px;top:774px;white-space:pre;font-size:12px;line-height:15px;font-weight:bold;letter-spacing:-0.38px">Administrator</div>
<div style="position:absolute;left:1032px;top:774px;white-space:pre;font-size:12px;line-height:15px;font-weight:bold;letter-spacing:-0.15px">1.1 Examine Existing Process Environment</div>
<div style="position:absolute;left:23px;top:792px;white-space:pre;font-size:11.6px;line-height:15px;font-weight:bold;color:#0808b0">New Assignments: Employee 1</div>
<div style="position:absolute;left:542px;top:808px;width:1px;height:19px;background:#a0a0a0"></div>
<div style="position:absolute;left:780px;top:808px;width:1px;height:19px;background:#a0a0a0"></div>
<div style="position:absolute;left:1029px;top:808px;width:1px;height:19px;background:#a0a0a0"></div>
<div style="position:absolute;left:3px;top:827px;width:1273px;height:1px;background:#a0a0a0"></div>
<div style="position:absolute;left:3px;top:844px;width:1273px;height:1px;background:#a0a0a0"></div>
<div style="position:absolute;left:6px;top:811px;white-space:pre;font-size:12px;line-height:15px;font-weight:bold;letter-spacing:-0.05px">[ 9 ] Construct a process flow chart illustrating the process content.</div>
<div style="position:absolute;left:546px;top:811px;white-space:pre;font-size:12px;line-height:15px;font-weight:bold;letter-spacing:0.45px">7/25/2011 7:59:55 PM</div>
<div style="position:absolute;left:784px;top:811px;white-space:pre;font-size:12px;line-height:15px;font-weight:bold;letter-spacing:-0.38px">Administrator</div>
<div style="position:absolute;left:1032px;top:811px;white-space:pre;font-size:12px;line-height:15px;font-weight:bold;letter-spacing:-0.15px">1.1 Examine Existing Process Environment</div>
<div style="position:absolute;left:23px;top:829px;white-space:pre;font-size:11.6px;line-height:15px;font-weight:bold;color:#0808b0">New Assignments: Employee 1</div>
<div style="position:absolute;left:542px;top:845px;width:1px;height:19px;background:#a0a0a0"></div>
<div style="position:absolute;left:780px;top:845px;width:1px;height:19px;background:#a0a0a0"></div>
<div style="position:absolute;left:1029px;top:845px;width:1px;height:19px;background:#a0a0a0"></div>
<div style="position:absolute;left:3px;top:864px;width:1273px;height:1px;background:#a0a0a0"></div>
<div style="position:absolute;left:3px;top:881px;width:1273px;height:1px;background:#a0a0a0"></div>
<div style="position:absolute;left:6px;top:848px;white-space:pre;font-size:12px;line-height:15px;font-weight:bold;letter-spacing:-0.05px">[ 5 ] Document requirements.</div>
<div style="position:absolute;left:546px;top:848px;white-space:pre;font-size:12px;line-height:15px;font-weight:bold;letter-spacing:0.45px">7/25/2011 7:59:55 PM</div>
<div style="position:absolute;left:784px;top:848px;white-space:pre;font-size:12px;line-height:15px;font-weight:bold;letter-spacing:-0.38px">Administrator</div>
<div style="position:absolute;left:1032px;top:848px;white-space:pre;font-size:12px;line-height:15px;font-weight:bold;letter-spacing:-0.15px">1.2 Identify Requirements</div>
<div style="position:absolute;left:23px;top:866px;white-space:pre;font-size:11.6px;line-height:15px;font-weight:bold;color:#0808b0">New Assignments: Employee 1</div>
<div style="position:absolute;left:542px;top:882px;width:1px;height:19px;background:#a0a0a0"></div>
<div style="position:absolute;left:780px;top:882px;width:1px;height:19px;background:#a0a0a0"></div>
<div style="position:absolute;left:1029px;top:882px;width:1px;height:19px;background:#a0a0a0"></div>
<div style="position:absolute;left:3px;top:901px;width:1273px;height:1px;background:#a0a0a0"></div>
<div style="position:absolute;left:3px;top:918px;width:1273px;height:1px;background:#a0a0a0"></div>
<div style="position:absolute;left:6px;top:885px;white-space:pre;font-size:12px;line-height:15px;font-weight:bold;letter-spacing:-0.05px">[ 8 ] Determine content (steps and their interrelationships) of every process.</div>
<div style="position:absolute;left:546px;top:885px;white-space:pre;font-size:12px;line-height:15px;font-weight:bold;letter-spacing:0.45px">7/25/2011 8:00:00 PM</div>
<div style="position:absolute;left:784px;top:885px;white-space:pre;font-size:12px;line-height:15px;font-weight:bold;letter-spacing:-0.38px">Administrator</div>
<div style="position:absolute;left:1032px;top:885px;white-space:pre;font-size:12px;line-height:15px;font-weight:bold;letter-spacing:-0.15px">1.1 Examine Existing Process Environment</div>
<div style="position:absolute;left:23px;top:903px;white-space:pre;font-size:11.6px;line-height:15px;font-weight:bold;color:#0808b0">Priority: Normal -&gt; High</div>
<div style="position:absolute;left:542px;top:919px;width:1px;height:19px;background:#a0a0a0"></div>
<div style="position:absolute;left:780px;top:919px;width:1px;height:19px;background:#a0a0a0"></div>
<div style="position:absolute;left:1029px;top:919px;width:1px;height:19px;background:#a0a0a0"></div>
<div style="position:absolute;left:3px;top:938px;width:1273px;height:1px;background:#a0a0a0"></div>
<div style="position:absolute;left:3px;top:955px;width:1273px;height:1px;background:#a0a0a0"></div>
<div style="position:absolute;left:6px;top:922px;white-space:pre;font-size:12px;line-height:15px;font-weight:bold;letter-spacing:-0.05px">[ 5 ] Document requirements.</div>
<div style="position:absolute;left:546px;top:922px;white-space:pre;font-size:12px;line-height:15px;font-weight:bold;letter-spacing:0.45px">7/25/2011 8:00:00 PM</div>
<div style="position:absolute;left:784px;top:922px;white-space:pre;font-size:12px;line-height:15px;font-weight:bold;letter-spacing:-0.38px">Administrator</div>
<div style="position:absolute;left:1032px;top:922px;white-space:pre;font-size:12px;line-height:15px;font-weight:bold;letter-spacing:-0.15px">1.2 Identify Requirements</div>
<div style="position:absolute;left:23px;top:940px;white-space:pre;font-size:11.6px;line-height:15px;font-weight:bold;color:#0808b0">Priority: Normal -&gt; High</div>
<div style="position:absolute;left:0px;top:1004px;width:1280px;height:20px;background:#f0eeee;border-top:1px solid #a0a0a0"></div>
<div style="position:absolute;left:2px;top:638px;width:1276px;height:21px;border:1px solid #e0e2e6;border-top:none;border-radius:0 0 3px 3px;background:#ffffff"></div>
<div style="position:absolute;left:30px;top:641px;white-space:pre;font-size:10.6px;line-height:15px;">Notifications</div>
<svg style="position:absolute;left:10px;top:641px" width="16" height="16"><use href="#env" width="16" height="16"/></svg>
<svg style="position:absolute;left:1243px;top:642px" width="12" height="13" viewBox="0 0 12 13"><path d="M3 1.5 H9 M4 1.5 V7 M8 1.5 V7 M1.5 7.5 H10.5 M6 7.5 V12.5" stroke="#6a6a6a" stroke-width="1.1" fill="none"/></svg>
<div style="position:absolute;left:1260px;top:642px;width:14px;height:14px;background:linear-gradient(#f4c0b8 0%,#e09080 40%,#c05040 55%,#e8a898 100%);border:1px solid #3a1a1a;border-radius:2px"></div>
<svg style="position:absolute;left:1263px;top:645px" width="8" height="8" viewBox="0 0 8 8"><path d="M1.5 1.5 L6.5 6.5 M6.5 1.5 L1.5 6.5" stroke="#fff" stroke-width="2"/></svg>
<div style="position:absolute;left:6px;top:666px;width:2px;height:2px;background:#a9b1c2"></div>
<div style="position:absolute;left:6px;top:670px;width:2px;height:2px;background:#a9b1c2"></div>
<div style="position:absolute;left:6px;top:674px;width:2px;height:2px;background:#a9b1c2"></div>
<div style="position:absolute;left:6px;top:678px;width:2px;height:2px;background:#a9b1c2"></div>
<div style="position:absolute;left:6px;top:682px;width:2px;height:2px;background:#a9b1c2"></div>
<div style="position:absolute;left:6px;top:686px;width:2px;height:2px;background:#a9b1c2"></div>
<div style="position:absolute;left:6px;top:690px;width:2px;height:2px;background:#a9b1c2"></div>
<svg style="position:absolute;left:14px;top:668px" width="25" height="25"><use href="#refresh" width="25" height="25"/></svg>
<div style="position:absolute;left:45px;top:666px;width:1px;height:28px;background:#6c7588"></div>
<div style="position:absolute;left:46px;top:666px;width:1px;height:28px;background:#ffffff"></div>
<svg style="position:absolute;left:52px;top:668px" width="24" height="24"><use href="#env" width="24" height="24"/></svg>
<svg style="position:absolute;left:52px;top:682px" width="17" height="9"><use href="#eye" width="17" height="9"/></svg>
<svg style="position:absolute;left:84px;top:668px" width="17" height="17"><use href="#env" width="17" height="17"/></svg>
<svg style="position:absolute;left:93px;top:676px" width="16" height="16"><use href="#env" width="16" height="16"/></svg>
<svg style="position:absolute;left:84px;top:682px" width="17" height="9"><use href="#eye" width="17" height="9"/></svg>
<div style="position:absolute;left:114px;top:666px;width:1px;height:28px;background:#6c7588"></div>
<div style="position:absolute;left:115px;top:666px;width:1px;height:28px;background:#ffffff"></div>
<div style="position:absolute;left:117px;top:665px;width:32px;height:30px;background:linear-gradient(#d6dae6,#c4cad9);border:1px solid #5c6270;border-radius:3px;box-shadow:inset 0 0 0 1px #e6e9f0"></div>
<svg style="position:absolute;left:122px;top:669px" width="24" height="24"><use href="#env" width="24" height="24"/></svg>
<svg style="position:absolute;left:122px;top:681px" width="18" height="9" viewBox="0 0 18 9"><path d="M1 4 Q9 -1 17 4 Q9 9 1 4Z" fill="#e8b890"/><path d="M1 5 Q9 9 17 5" stroke="#222" stroke-width="1.2" fill="none"/><circle cx="9" cy="6" r="2.4" fill="#3a8ad8"/></svg>
<svg style="position:absolute;left:154px;top:668px" width="24" height="24"><use href="#env" width="24" height="24"/></svg>
<svg style="position:absolute;left:154px;top:675px" width="16" height="16"><use href="#bclk" width="16" height="16"/></svg>
<svg style="position:absolute;left:165px;top:683px" width="14" height="8" viewBox="0 0 14 8"><rect x="0.8" y="1" width="7" height="5" rx="2.5" fill="none" stroke="#777" stroke-width="1.3"/><rect x="5.5" y="1.5" width="7" height="5" rx="2.5" fill="none" stroke="#777" stroke-width="1.3"/></svg>
<div style="position:absolute;left:181px;top:665px;width:33px;height:30px;background:linear-gradient(#d6dae6,#c4cad9);border:1px solid #5c6270;border-radius:3px;box-shadow:inset 0 0 0 1px #e6e9f0"></div>
<svg style="position:absolute;left:186px;top:669px" width="24" height="24" viewBox="0 0 24 24"><path d="M9 0.5 L23.5 9 V23.5 H9Z" fill="#e8eaf0" stroke="#c4c8d0"/><path d="M9 0.5 L23.5 9 L14 12Z" fill="#8aa0e0"/><path d="M1.5 3.5 H12 L16.5 8 V23.5 H1.5Z" fill="#fafafa" stroke="#c8c8c8"/><path d="M4 9 H12 M4 11.5 H13 M4 14 H11 M4 16.5 H13 M4 19 H10" stroke="#222" stroke-width="1"/></svg>
<div style="position:absolute;left:215px;top:666px;width:1px;height:28px;background:#6c7588"></div>
<div style="position:absolute;left:216px;top:666px;width:1px;height:28px;background:#ffffff"></div>
<svg style="position:absolute;left:230px;top:668px" width="16" height="21"><use href="#pg" width="16" height="21"/></svg>
<svg style="position:absolute;left:222px;top:675px" width="17" height="17"><use href="#bclk" width="17" height="17"/></svg>
<svg style="position:absolute;left:232px;top:680px" width="13" height="13" viewBox="0 0 13 13"><path d="M1.5 11.5 L2.5 8 L10 0.8 L12.2 3 L4.8 10.5Z" fill="#f2c050" stroke="#b07820" stroke-width="0.7"/><path d="M1.5 11.5 L2.5 8 L4.8 10.5Z" fill="#333"/></svg>
<svg style="position:absolute;left:254px;top:675px" width="17" height="17"><use href="#bclk" width="17" height="17"/></svg>
<svg style="position:absolute;left:260px;top:667px" width="18" height="25" viewBox="0 0 18 25"><path d="M5 20 V12 Q5 10 7 10.5 V3 Q7 1 9 1 Q11 1 11 3 V10 Q13 9.5 14 11 Q16 10.5 16.5 12.5 Q17.5 12.5 17.5 15 V18 Q17 21 15 22 H7Z" fill="#f4c8a8" stroke="#c89070" stroke-width="0.8"/><rect x="7" y="21" width="9" height="3" fill="#777"/></svg>
<div style="position:absolute;left:284px;top:666px;width:1px;height:28px;background:#6c7588"></div>
<div style="position:absolute;left:285px;top:666px;width:1px;height:28px;background:#ffffff"></div>
<svg style="position:absolute;left:291px;top:668px" width="24" height="23"><use href="#colpg" width="24" height="23"/></svg>
<svg style="position:absolute;left:318px;top:679px" width="6" height="4"><use href="#tbarrow" width="6" height="4"/></svg>
<div style="position:absolute;left:331px;top:666px;width:1px;height:28px;background:#6c7588"></div>
<div style="position:absolute;left:332px;top:666px;width:1px;height:28px;background:#ffffff"></div>
<svg style="position:absolute;left:338px;top:668px" width="24" height="23"><use href="#funb" width="24" height="23"/></svg>
<svg style="position:absolute;left:348px;top:678px" width="15" height="14" viewBox="0 0 15 14"><rect x="2" y="3" width="12" height="8" rx="3" transform="rotate(-45 8 7)" fill="#f8f8f8" stroke="#c8c8c8"/></svg>
<svg style="position:absolute;left:370px;top:668px" width="24" height="23"><use href="#funb" width="24" height="23"/></svg>
<svg style="position:absolute;left:400px;top:688px" width="6" height="4"><use href="#tbarrow" width="6" height="4"/></svg>
<div style="position:absolute;left:4px;top:1011px;width:18px;height:9px;background:#8a8a8a"></div>
<svg style="position:absolute;left:5px;top:1012px" width="16" height="7" viewBox="0 0 16 7"><path d="M0.5 0.5 H15 L12 3.5 H4 Z" fill="#c8c8c8"/><path d="M0.5 0.5 L4 3.5 L0.5 6.5Z" fill="#e8e8e8"/></svg>
<div style="position:absolute;left:28px;top:1006px;width:1px;height:15px;background:#d8d8d8"></div>
<div style="position:absolute;left:233px;top:1006px;width:101px;height:17px;background:linear-gradient(#f2f2f2,#e0e0e0 45%,#d0d0d0 55%,#c8c8c8);border:1px solid #b0b0b0;border-bottom:none;border-radius:2px 2px 0 0"></div>
<div style="position:absolute;left:233px;top:1007px;white-space:pre;font-size:10.5px;line-height:14px;width:101px;text-align:center;color:#111">0 %</div>
<div style="position:absolute;left:335px;top:1006px;width:1px;height:15px;background:#d8d8d8"></div>
<div style="position:absolute;left:400px;top:1006px;width:1px;height:15px;background:#d8d8d8"></div>
<div style="position:absolute;left:0px;top:1022px;width:1280px;height:2px;background:linear-gradient(#a8c4e4,#5a86b8)"></div>
</body></html>
